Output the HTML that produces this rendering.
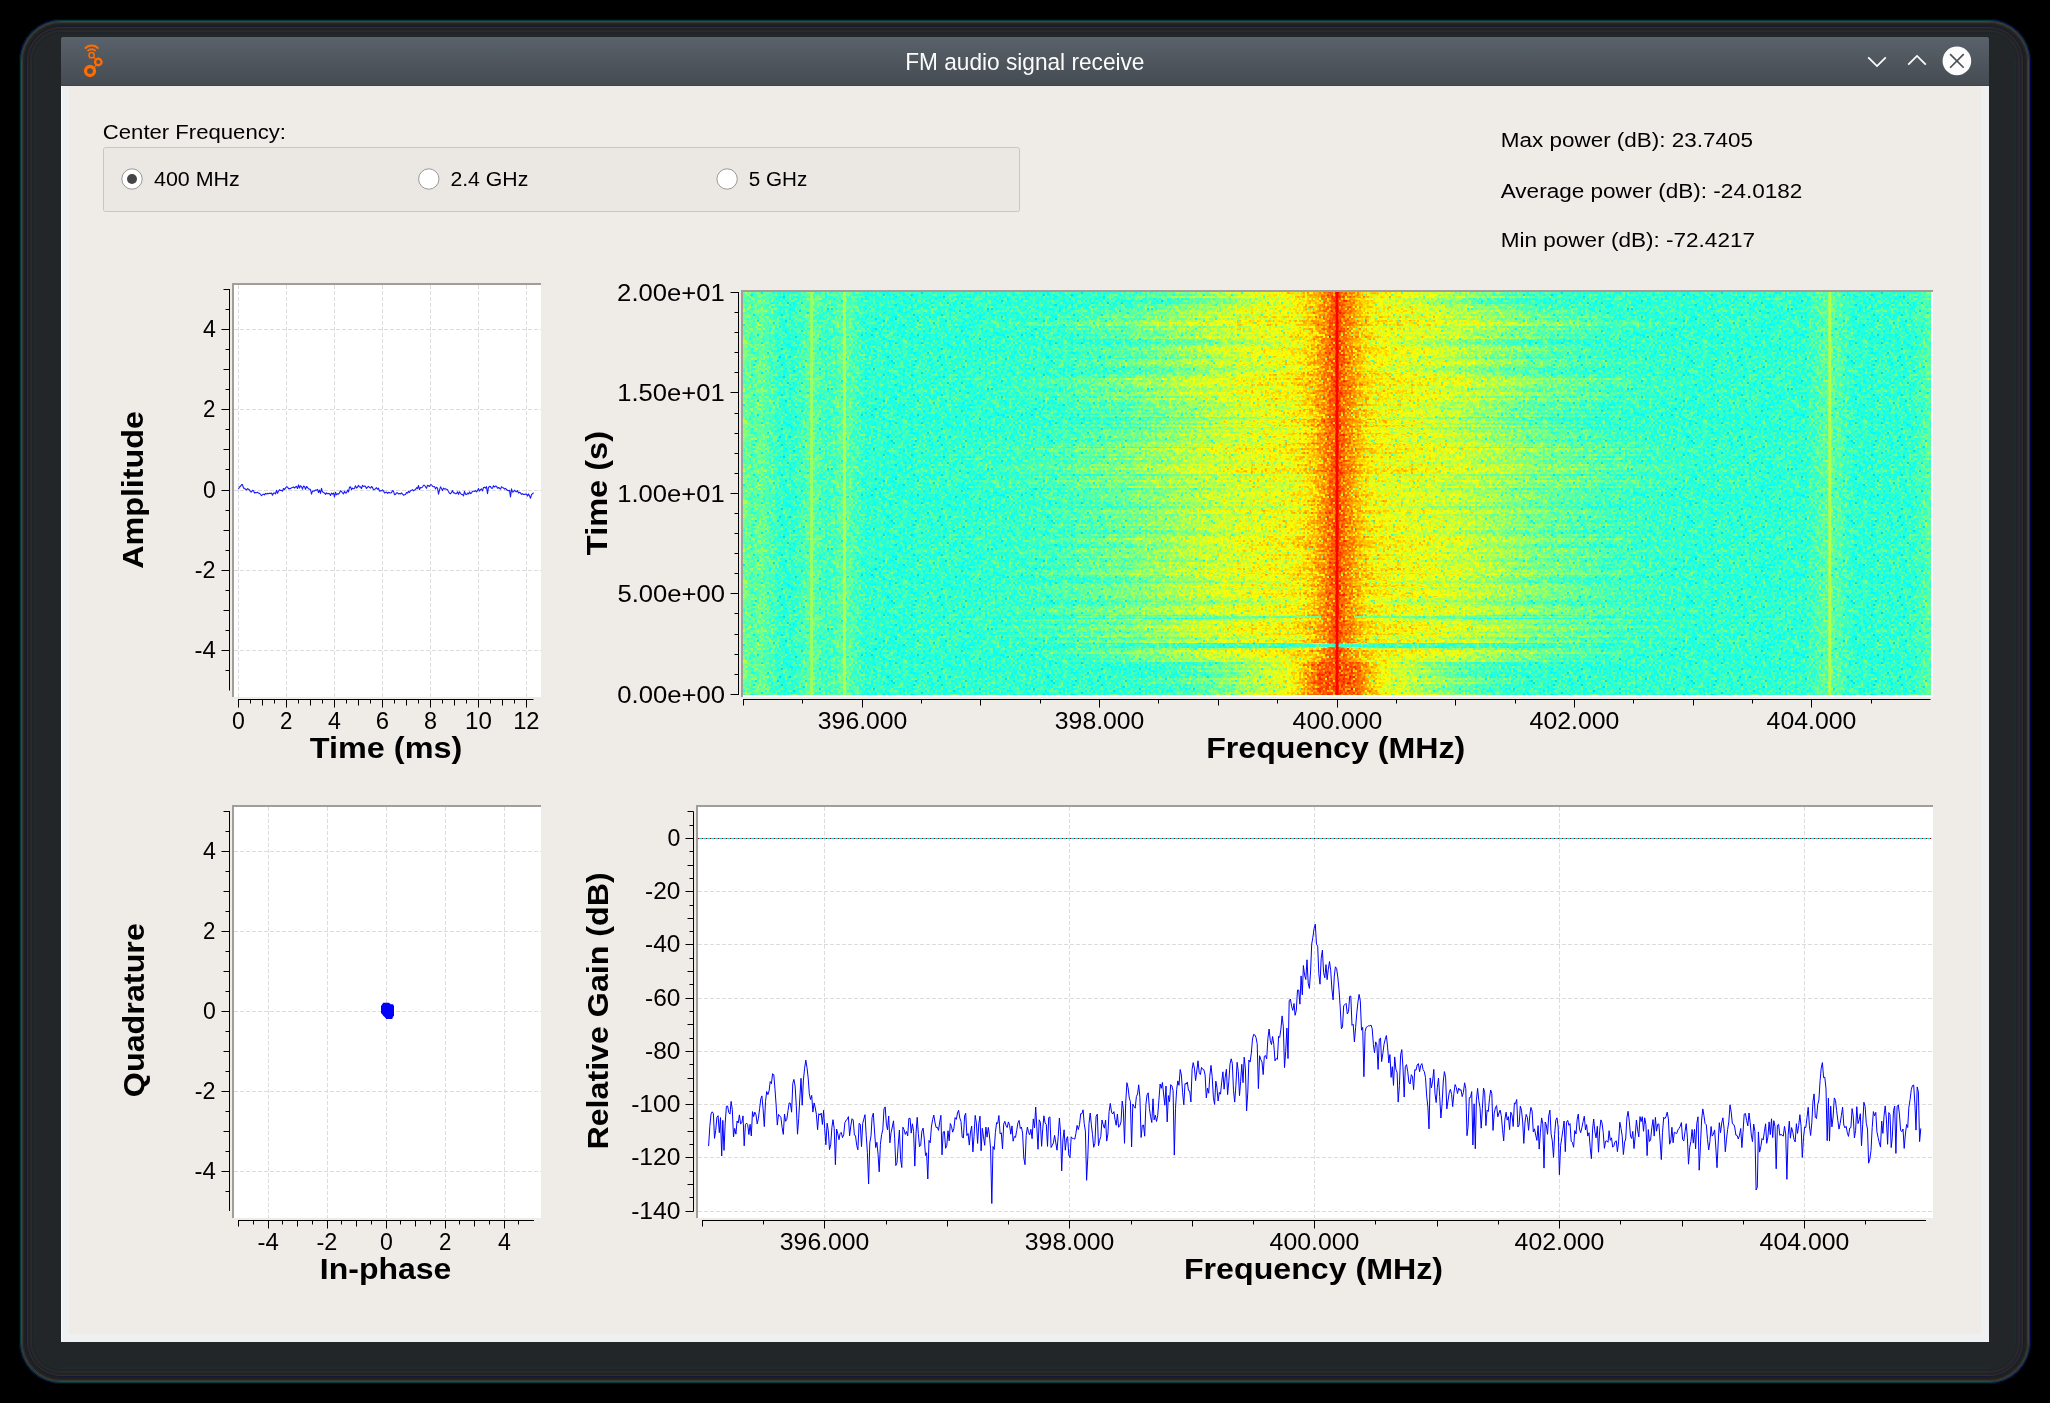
<!DOCTYPE html>
<html><head><meta charset="utf-8"><title>FM audio signal receive</title>
<style>html,body{margin:0;padding:0;background:#000;overflow:hidden;width:2050px;height:1403px}
svg{display:block;will-change:transform}text{font-family:"Liberation Sans", sans-serif}</style></head>
<body>
<svg width="2050" height="1403" viewBox="0 0 2050 1403" font-family="'Liberation Sans', sans-serif"><defs><linearGradient id="tb" x1="0" y1="0" x2="0" y2="1"><stop offset="0" stop-color="#59616a"/><stop offset="1" stop-color="#454b52"/></linearGradient><filter id="wf" filterUnits="userSpaceOnUse" x="743" y="292" width="1188" height="403" color-interpolation-filters="sRGB">
<feTurbulence type="fractalNoise" baseFrequency="0.42 0.42" numOctaves="1" seed="5" result="n"/>
<feColorMatrix in="n" type="matrix" values="1 0 0 0 0 1 0 0 0 0 1 0 0 0 0 0 0 0 0 1" result="g"/>
<feComposite in="SourceGraphic" in2="g" operator="arithmetic" k1="0.200" k2="1" k3="0.030" k4="-0.015" result="s"/>
<feComponentTransfer in="s">
<feFuncR type="table" tableValues="0 0 1 1 1"/>
<feFuncG type="table" tableValues="0.5 1 1 0 0"/>
<feFuncB type="table" tableValues="0.5 1 0 0 0"/>
<feFuncA type="linear" slope="0" intercept="1"/>
</feComponentTransfer>
</filter><linearGradient id="band" x1="0" y1="0" x2="1" y2="0"><stop offset="0.000" stop-color="rgb(67,67,67)"/><stop offset="0.025" stop-color="rgb(68,68,68)"/><stop offset="0.050" stop-color="rgb(69,69,69)"/><stop offset="0.075" stop-color="rgb(70,70,70)"/><stop offset="0.100" stop-color="rgb(72,72,72)"/><stop offset="0.125" stop-color="rgb(75,75,75)"/><stop offset="0.150" stop-color="rgb(78,78,78)"/><stop offset="0.175" stop-color="rgb(81,81,81)"/><stop offset="0.200" stop-color="rgb(86,86,86)"/><stop offset="0.225" stop-color="rgb(90,90,90)"/><stop offset="0.250" stop-color="rgb(95,95,95)"/><stop offset="0.275" stop-color="rgb(100,100,100)"/><stop offset="0.300" stop-color="rgb(106,106,106)"/><stop offset="0.325" stop-color="rgb(110,110,110)"/><stop offset="0.350" stop-color="rgb(114,114,114)"/><stop offset="0.375" stop-color="rgb(117,117,117)"/><stop offset="0.400" stop-color="rgb(120,120,120)"/><stop offset="0.425" stop-color="rgb(122,122,122)"/><stop offset="0.450" stop-color="rgb(123,123,123)"/><stop offset="0.475" stop-color="rgb(123,123,123)"/><stop offset="0.500" stop-color="rgb(124,124,124)"/><stop offset="0.525" stop-color="rgb(123,123,123)"/><stop offset="0.550" stop-color="rgb(123,123,123)"/><stop offset="0.575" stop-color="rgb(122,122,122)"/><stop offset="0.600" stop-color="rgb(120,120,120)"/><stop offset="0.625" stop-color="rgb(117,117,117)"/><stop offset="0.650" stop-color="rgb(114,114,114)"/><stop offset="0.675" stop-color="rgb(110,110,110)"/><stop offset="0.700" stop-color="rgb(106,106,106)"/><stop offset="0.725" stop-color="rgb(100,100,100)"/><stop offset="0.750" stop-color="rgb(95,95,95)"/><stop offset="0.775" stop-color="rgb(90,90,90)"/><stop offset="0.800" stop-color="rgb(86,86,86)"/><stop offset="0.825" stop-color="rgb(81,81,81)"/><stop offset="0.850" stop-color="rgb(78,78,78)"/><stop offset="0.875" stop-color="rgb(75,75,75)"/><stop offset="0.900" stop-color="rgb(72,72,72)"/><stop offset="0.925" stop-color="rgb(70,70,70)"/><stop offset="0.950" stop-color="rgb(69,69,69)"/><stop offset="0.975" stop-color="rgb(68,68,68)"/><stop offset="1.000" stop-color="rgb(67,67,67)"/></linearGradient><linearGradient id="core2" x1="0" y1="0" x2="1" y2="0"><stop offset="0" stop-color="rgb(156,156,156)" stop-opacity="0"/><stop offset="0.22" stop-color="rgb(156,156,156)" stop-opacity="0.5"/><stop offset="0.32" stop-color="rgb(156,156,156)" stop-opacity="0.95"/><stop offset="0.68" stop-color="rgb(156,156,156)" stop-opacity="0.95"/><stop offset="0.78" stop-color="rgb(156,156,156)" stop-opacity="0.5"/><stop offset="1" stop-color="rgb(156,156,156)" stop-opacity="0"/></linearGradient><linearGradient id="core" x1="0" y1="0" x2="1" y2="0"><stop offset="0.000" stop-color="rgb(160,160,160)" stop-opacity="0.000"/><stop offset="0.050" stop-color="rgb(160,160,160)" stop-opacity="0.025"/><stop offset="0.100" stop-color="rgb(160,160,160)" stop-opacity="0.050"/><stop offset="0.150" stop-color="rgb(160,160,160)" stop-opacity="0.075"/><stop offset="0.200" stop-color="rgb(160,160,160)" stop-opacity="0.100"/><stop offset="0.250" stop-color="rgb(160,160,160)" stop-opacity="0.200"/><stop offset="0.300" stop-color="rgb(160,160,160)" stop-opacity="0.300"/><stop offset="0.350" stop-color="rgb(160,160,160)" stop-opacity="0.467"/><stop offset="0.400" stop-color="rgb(160,160,160)" stop-opacity="0.647"/><stop offset="0.450" stop-color="rgb(160,160,160)" stop-opacity="0.795"/><stop offset="0.500" stop-color="rgb(160,160,160)" stop-opacity="0.920"/><stop offset="0.550" stop-color="rgb(160,160,160)" stop-opacity="0.795"/><stop offset="0.600" stop-color="rgb(160,160,160)" stop-opacity="0.647"/><stop offset="0.650" stop-color="rgb(160,160,160)" stop-opacity="0.467"/><stop offset="0.700" stop-color="rgb(160,160,160)" stop-opacity="0.300"/><stop offset="0.750" stop-color="rgb(160,160,160)" stop-opacity="0.200"/><stop offset="0.800" stop-color="rgb(160,160,160)" stop-opacity="0.100"/><stop offset="0.850" stop-color="rgb(160,160,160)" stop-opacity="0.075"/><stop offset="0.900" stop-color="rgb(160,160,160)" stop-opacity="0.050"/><stop offset="0.950" stop-color="rgb(160,160,160)" stop-opacity="0.025"/><stop offset="1.000" stop-color="rgb(160,160,160)" stop-opacity="0.000"/></linearGradient><linearGradient id="edgeL" x1="0" y1="0" x2="1" y2="0"><stop offset="0" stop-color="rgb(83,83,83)"/><stop offset="1" stop-color="rgb(67,67,67)"/></linearGradient><linearGradient id="edgeR" x1="0" y1="0" x2="1" y2="0"><stop offset="0" stop-color="rgb(67,67,67)"/><stop offset="1" stop-color="rgb(79,79,79)"/></linearGradient><linearGradient id="skirt" x1="0" y1="0" x2="1" y2="0"><stop offset="0" stop-color="rgb(80,80,80)" stop-opacity="0"/><stop offset="0.5" stop-color="rgb(80,80,80)" stop-opacity="1"/><stop offset="1" stop-color="rgb(80,80,80)" stop-opacity="0"/></linearGradient><pattern id="bn" patternUnits="userSpaceOnUse" x="743" y="292" width="160" height="80"><path d="M72 0h2v2h-2zM76 0h2v2h-2zM144 0h2v2h-2zM156 0h2v2h-2zM110 2h2v2h-2zM150 2h2v2h-2zM36 4h2v2h-2zM66 4h2v2h-2zM122 4h2v2h-2zM152 4h2v2h-2zM6 6h2v2h-2zM32 6h2v2h-2zM90 6h2v2h-2zM96 6h2v2h-2zM104 6h2v2h-2zM118 6h2v2h-2zM122 6h2v2h-2zM12 8h2v2h-2zM78 8h2v2h-2zM28 10h2v2h-2zM8 12h2v2h-2zM18 12h2v2h-2zM46 12h2v2h-2zM102 12h2v2h-2zM2 14h2v2h-2zM28 14h2v2h-2zM62 14h2v2h-2zM8 16h2v2h-2zM46 16h2v2h-2zM92 16h2v2h-2zM156 16h2v2h-2zM84 18h2v2h-2zM156 18h2v2h-2zM52 20h2v2h-2zM112 20h2v2h-2zM140 20h2v2h-2zM26 24h2v2h-2zM72 24h2v2h-2zM76 24h2v2h-2zM128 24h2v2h-2zM150 24h2v2h-2zM152 24h2v2h-2zM4 26h2v2h-2zM46 26h2v2h-2zM80 26h2v2h-2zM48 28h2v2h-2zM62 28h2v2h-2zM68 28h2v2h-2zM100 28h2v2h-2zM16 30h2v2h-2zM60 30h2v2h-2zM120 30h2v2h-2zM136 30h2v2h-2zM144 30h2v2h-2zM40 32h2v2h-2zM66 32h2v2h-2zM110 32h2v2h-2zM36 34h2v2h-2zM52 34h2v2h-2zM58 34h2v2h-2zM124 34h2v2h-2zM136 34h2v2h-2zM140 34h2v2h-2zM26 36h2v2h-2zM64 36h2v2h-2zM66 36h2v2h-2zM78 36h2v2h-2zM112 36h2v2h-2zM130 36h2v2h-2zM138 36h2v2h-2zM144 36h2v2h-2zM20 38h2v2h-2zM26 38h2v2h-2zM42 38h2v2h-2zM82 38h2v2h-2zM128 38h2v2h-2zM8 40h2v2h-2zM92 40h2v2h-2zM122 40h2v2h-2zM136 40h2v2h-2zM144 40h2v2h-2zM60 42h2v2h-2zM94 42h2v2h-2zM98 42h2v2h-2zM100 42h2v2h-2zM154 42h2v2h-2zM10 44h2v2h-2zM64 44h2v2h-2zM70 44h2v2h-2zM86 44h2v2h-2zM100 44h2v2h-2zM108 44h2v2h-2zM130 44h2v2h-2zM136 44h2v2h-2zM158 44h2v2h-2zM6 46h2v2h-2zM20 46h2v2h-2zM34 46h2v2h-2zM68 46h2v2h-2zM140 46h2v2h-2zM26 48h2v2h-2zM82 48h2v2h-2zM146 48h2v2h-2zM8 50h2v2h-2zM94 50h2v2h-2zM110 50h2v2h-2zM146 50h2v2h-2zM44 52h2v2h-2zM146 52h2v2h-2zM48 54h2v2h-2zM82 54h2v2h-2zM118 54h2v2h-2zM124 54h2v2h-2zM138 54h2v2h-2zM156 54h2v2h-2zM8 56h2v2h-2zM48 56h2v2h-2zM52 56h2v2h-2zM62 56h2v2h-2zM86 56h2v2h-2zM70 58h2v2h-2zM88 58h2v2h-2zM116 58h2v2h-2zM130 58h2v2h-2zM132 58h2v2h-2zM8 60h2v2h-2zM10 60h2v2h-2zM118 60h2v2h-2zM130 62h2v2h-2zM92 64h2v2h-2zM122 64h2v2h-2zM132 64h2v2h-2zM130 66h2v2h-2zM26 68h2v2h-2zM72 68h2v2h-2zM110 68h2v2h-2zM146 68h2v2h-2zM28 70h2v2h-2zM140 70h2v2h-2zM122 72h2v2h-2zM144 72h2v2h-2zM4 74h2v2h-2zM92 74h2v2h-2zM10 76h2v2h-2zM28 76h2v2h-2zM42 76h2v2h-2zM0 78h2v2h-2zM22 78h2v2h-2zM104 78h2v2h-2zM108 78h2v2h-2zM142 78h2v2h-2z" fill="black" fill-opacity="0.17"/><path d="M30 0h2v2h-2zM86 0h2v2h-2zM88 0h2v2h-2zM98 0h2v2h-2zM110 0h2v2h-2zM124 0h2v2h-2zM132 0h2v2h-2zM0 2h2v2h-2zM10 2h2v2h-2zM40 2h2v2h-2zM56 2h2v2h-2zM70 2h2v2h-2zM82 2h2v2h-2zM118 2h2v2h-2zM126 2h2v2h-2zM130 2h2v2h-2zM144 2h2v2h-2zM146 2h2v2h-2zM4 4h2v2h-2zM10 4h2v2h-2zM52 4h2v2h-2zM54 4h2v2h-2zM60 4h2v2h-2zM70 4h2v2h-2zM82 4h2v2h-2zM102 4h2v2h-2zM138 4h2v2h-2zM26 6h2v2h-2zM54 6h2v2h-2zM80 6h2v2h-2zM86 6h2v2h-2zM106 6h2v2h-2zM112 6h2v2h-2zM114 6h2v2h-2zM124 6h2v2h-2zM150 6h2v2h-2zM0 8h2v2h-2zM22 8h2v2h-2zM26 8h2v2h-2zM52 8h2v2h-2zM66 8h2v2h-2zM94 8h2v2h-2zM104 8h2v2h-2zM116 8h2v2h-2zM0 10h2v2h-2zM2 10h2v2h-2zM6 10h2v2h-2zM30 10h2v2h-2zM50 10h2v2h-2zM66 10h2v2h-2zM96 10h2v2h-2zM98 10h2v2h-2zM106 10h2v2h-2zM154 10h2v2h-2zM24 12h2v2h-2zM50 12h2v2h-2zM66 12h2v2h-2zM68 12h2v2h-2zM88 12h2v2h-2zM90 12h2v2h-2zM114 12h2v2h-2zM150 12h2v2h-2zM14 14h2v2h-2zM16 14h2v2h-2zM22 14h2v2h-2zM64 14h2v2h-2zM66 14h2v2h-2zM68 14h2v2h-2zM78 14h2v2h-2zM116 14h2v2h-2zM130 14h2v2h-2zM134 14h2v2h-2zM156 14h2v2h-2zM48 16h2v2h-2zM98 16h2v2h-2zM106 16h2v2h-2zM122 16h2v2h-2zM126 16h2v2h-2zM132 16h2v2h-2zM138 16h2v2h-2zM146 16h2v2h-2zM148 16h2v2h-2zM4 18h2v2h-2zM50 18h2v2h-2zM74 18h2v2h-2zM104 18h2v2h-2zM142 18h2v2h-2zM154 18h2v2h-2zM2 20h2v2h-2zM34 20h2v2h-2zM36 20h2v2h-2zM40 20h2v2h-2zM70 20h2v2h-2zM80 20h2v2h-2zM96 20h2v2h-2zM102 20h2v2h-2zM114 20h2v2h-2zM16 22h2v2h-2zM22 22h2v2h-2zM24 22h2v2h-2zM46 22h2v2h-2zM74 22h2v2h-2zM76 22h2v2h-2zM88 22h2v2h-2zM90 22h2v2h-2zM102 22h2v2h-2zM144 22h2v2h-2zM12 24h2v2h-2zM14 24h2v2h-2zM18 24h2v2h-2zM30 24h2v2h-2zM56 24h2v2h-2zM94 24h2v2h-2zM114 24h2v2h-2zM122 24h2v2h-2zM124 24h2v2h-2zM148 24h2v2h-2zM154 24h2v2h-2zM8 26h2v2h-2zM14 26h2v2h-2zM22 26h2v2h-2zM60 26h2v2h-2zM70 26h2v2h-2zM76 26h2v2h-2zM104 26h2v2h-2zM114 26h2v2h-2zM118 26h2v2h-2zM146 26h2v2h-2zM10 28h2v2h-2zM74 28h2v2h-2zM98 28h2v2h-2zM112 28h2v2h-2zM118 28h2v2h-2zM146 28h2v2h-2zM148 28h2v2h-2zM24 30h2v2h-2zM74 30h2v2h-2zM78 30h2v2h-2zM102 30h2v2h-2zM152 30h2v2h-2zM58 32h2v2h-2zM68 32h2v2h-2zM70 32h2v2h-2zM104 32h2v2h-2zM114 32h2v2h-2zM118 32h2v2h-2zM2 34h2v2h-2zM6 34h2v2h-2zM8 34h2v2h-2zM16 34h2v2h-2zM86 34h2v2h-2zM90 34h2v2h-2zM102 34h2v2h-2zM112 34h2v2h-2zM150 34h2v2h-2zM156 34h2v2h-2zM32 36h2v2h-2zM60 36h2v2h-2zM90 36h2v2h-2zM96 36h2v2h-2zM126 36h2v2h-2zM146 36h2v2h-2zM154 36h2v2h-2zM84 38h2v2h-2zM102 38h2v2h-2zM108 38h2v2h-2zM154 38h2v2h-2zM156 38h2v2h-2zM2 40h2v2h-2zM42 40h2v2h-2zM44 40h2v2h-2zM80 40h2v2h-2zM90 40h2v2h-2zM94 40h2v2h-2zM102 40h2v2h-2zM114 40h2v2h-2zM118 40h2v2h-2zM126 40h2v2h-2zM140 40h2v2h-2zM158 40h2v2h-2zM8 42h2v2h-2zM32 42h2v2h-2zM46 42h2v2h-2zM96 42h2v2h-2zM136 42h2v2h-2zM150 42h2v2h-2zM6 44h2v2h-2zM14 44h2v2h-2zM20 44h2v2h-2zM32 44h2v2h-2zM36 44h2v2h-2zM54 44h2v2h-2zM62 44h2v2h-2zM88 44h2v2h-2zM116 44h2v2h-2zM124 44h2v2h-2zM2 46h2v2h-2zM18 46h2v2h-2zM44 46h2v2h-2zM56 46h2v2h-2zM62 46h2v2h-2zM84 46h2v2h-2zM96 46h2v2h-2zM114 46h2v2h-2zM142 46h2v2h-2zM20 48h2v2h-2zM40 48h2v2h-2zM62 48h2v2h-2zM92 48h2v2h-2zM144 48h2v2h-2zM148 48h2v2h-2zM150 48h2v2h-2zM14 50h2v2h-2zM34 50h2v2h-2zM40 50h2v2h-2zM42 50h2v2h-2zM52 50h2v2h-2zM54 50h2v2h-2zM56 50h2v2h-2zM66 50h2v2h-2zM76 50h2v2h-2zM82 50h2v2h-2zM116 50h2v2h-2zM122 50h2v2h-2zM140 50h2v2h-2zM154 50h2v2h-2zM22 52h2v2h-2zM32 52h2v2h-2zM38 52h2v2h-2zM46 52h2v2h-2zM58 52h2v2h-2zM66 52h2v2h-2zM74 52h2v2h-2zM92 52h2v2h-2zM98 52h2v2h-2zM112 52h2v2h-2zM130 52h2v2h-2zM148 52h2v2h-2zM18 54h2v2h-2zM46 54h2v2h-2zM54 54h2v2h-2zM58 54h2v2h-2zM66 54h2v2h-2zM76 54h2v2h-2zM78 54h2v2h-2zM86 54h2v2h-2zM96 54h2v2h-2zM100 54h2v2h-2zM106 54h2v2h-2zM2 56h2v2h-2zM16 56h2v2h-2zM28 56h2v2h-2zM56 56h2v2h-2zM60 56h2v2h-2zM92 56h2v2h-2zM96 56h2v2h-2zM110 56h2v2h-2zM118 56h2v2h-2zM130 56h2v2h-2zM138 56h2v2h-2zM8 58h2v2h-2zM28 58h2v2h-2zM34 58h2v2h-2zM56 58h2v2h-2zM86 58h2v2h-2zM90 58h2v2h-2zM92 58h2v2h-2zM100 58h2v2h-2zM112 58h2v2h-2zM126 58h2v2h-2zM140 58h2v2h-2zM152 58h2v2h-2zM12 60h2v2h-2zM62 60h2v2h-2zM74 60h2v2h-2zM78 60h2v2h-2zM112 60h2v2h-2zM122 60h2v2h-2zM22 62h2v2h-2zM26 62h2v2h-2zM38 62h2v2h-2zM78 62h2v2h-2zM86 62h2v2h-2zM108 62h2v2h-2zM114 62h2v2h-2zM142 62h2v2h-2zM146 62h2v2h-2zM156 62h2v2h-2zM18 64h2v2h-2zM44 64h2v2h-2zM66 64h2v2h-2zM78 64h2v2h-2zM82 64h2v2h-2zM106 64h2v2h-2zM108 64h2v2h-2zM124 64h2v2h-2zM152 64h2v2h-2zM156 64h2v2h-2zM14 66h2v2h-2zM26 66h2v2h-2zM36 66h2v2h-2zM92 66h2v2h-2zM114 66h2v2h-2zM158 66h2v2h-2zM8 68h2v2h-2zM18 68h2v2h-2zM24 68h2v2h-2zM48 68h2v2h-2zM82 68h2v2h-2zM128 68h2v2h-2zM14 70h2v2h-2zM40 70h2v2h-2zM52 70h2v2h-2zM100 70h2v2h-2zM106 70h2v2h-2zM8 72h2v2h-2zM26 72h2v2h-2zM28 72h2v2h-2zM54 72h2v2h-2zM72 72h2v2h-2zM82 72h2v2h-2zM88 72h2v2h-2zM98 72h2v2h-2zM108 72h2v2h-2zM112 72h2v2h-2zM128 72h2v2h-2zM22 74h2v2h-2zM32 74h2v2h-2zM50 74h2v2h-2zM58 74h2v2h-2zM78 74h2v2h-2zM94 74h2v2h-2zM106 74h2v2h-2zM116 74h2v2h-2zM148 74h2v2h-2zM0 76h2v2h-2zM8 76h2v2h-2zM54 76h2v2h-2zM56 76h2v2h-2zM100 76h2v2h-2zM106 76h2v2h-2zM118 76h2v2h-2zM122 76h2v2h-2zM124 76h2v2h-2zM126 76h2v2h-2zM156 76h2v2h-2zM4 78h2v2h-2zM26 78h2v2h-2zM30 78h2v2h-2zM42 78h2v2h-2zM52 78h2v2h-2zM82 78h2v2h-2zM92 78h2v2h-2zM106 78h2v2h-2zM122 78h2v2h-2zM130 78h2v2h-2z" fill="black" fill-opacity="0.10"/><path d="M34 0h2v2h-2zM36 0h2v2h-2zM40 0h2v2h-2zM44 0h2v2h-2zM48 0h2v2h-2zM50 0h2v2h-2zM52 0h2v2h-2zM60 0h2v2h-2zM82 0h2v2h-2zM92 0h2v2h-2zM94 0h2v2h-2zM120 0h2v2h-2zM138 0h2v2h-2zM140 0h2v2h-2zM142 0h2v2h-2zM12 2h2v2h-2zM26 2h2v2h-2zM44 2h2v2h-2zM96 2h2v2h-2zM102 2h2v2h-2zM112 2h2v2h-2zM124 2h2v2h-2zM2 4h2v2h-2zM8 4h2v2h-2zM22 4h2v2h-2zM30 4h2v2h-2zM34 4h2v2h-2zM38 4h2v2h-2zM58 4h2v2h-2zM64 4h2v2h-2zM84 4h2v2h-2zM88 4h2v2h-2zM92 4h2v2h-2zM96 4h2v2h-2zM106 4h2v2h-2zM132 4h2v2h-2zM146 4h2v2h-2zM150 4h2v2h-2zM154 4h2v2h-2zM0 6h2v2h-2zM12 6h2v2h-2zM16 6h2v2h-2zM20 6h2v2h-2zM40 6h2v2h-2zM44 6h2v2h-2zM48 6h2v2h-2zM58 6h2v2h-2zM134 6h2v2h-2zM136 6h2v2h-2zM142 6h2v2h-2zM144 6h2v2h-2zM146 6h2v2h-2zM6 8h2v2h-2zM8 8h2v2h-2zM30 8h2v2h-2zM36 8h2v2h-2zM38 8h2v2h-2zM42 8h2v2h-2zM60 8h2v2h-2zM62 8h2v2h-2zM76 8h2v2h-2zM82 8h2v2h-2zM92 8h2v2h-2zM114 8h2v2h-2zM118 8h2v2h-2zM128 8h2v2h-2zM134 8h2v2h-2zM156 8h2v2h-2zM10 10h2v2h-2zM20 10h2v2h-2zM38 10h2v2h-2zM52 10h2v2h-2zM88 10h2v2h-2zM90 10h2v2h-2zM94 10h2v2h-2zM102 10h2v2h-2zM110 10h2v2h-2zM114 10h2v2h-2zM122 10h2v2h-2zM124 10h2v2h-2zM132 10h2v2h-2zM134 10h2v2h-2zM4 12h2v2h-2zM14 12h2v2h-2zM22 12h2v2h-2zM32 12h2v2h-2zM52 12h2v2h-2zM64 12h2v2h-2zM72 12h2v2h-2zM92 12h2v2h-2zM104 12h2v2h-2zM106 12h2v2h-2zM112 12h2v2h-2zM126 12h2v2h-2zM148 12h2v2h-2zM8 14h2v2h-2zM20 14h2v2h-2zM30 14h2v2h-2zM34 14h2v2h-2zM36 14h2v2h-2zM40 14h2v2h-2zM44 14h2v2h-2zM48 14h2v2h-2zM50 14h2v2h-2zM90 14h2v2h-2zM92 14h2v2h-2zM102 14h2v2h-2zM120 14h2v2h-2zM122 14h2v2h-2zM140 14h2v2h-2zM142 14h2v2h-2zM158 14h2v2h-2zM2 16h2v2h-2zM6 16h2v2h-2zM10 16h2v2h-2zM24 16h2v2h-2zM36 16h2v2h-2zM54 16h2v2h-2zM64 16h2v2h-2zM68 16h2v2h-2zM74 16h2v2h-2zM78 16h2v2h-2zM94 16h2v2h-2zM110 16h2v2h-2zM116 16h2v2h-2zM120 16h2v2h-2zM134 16h2v2h-2zM142 16h2v2h-2zM158 16h2v2h-2zM6 18h2v2h-2zM32 18h2v2h-2zM36 18h2v2h-2zM40 18h2v2h-2zM66 18h2v2h-2zM78 18h2v2h-2zM88 18h2v2h-2zM110 18h2v2h-2zM118 18h2v2h-2zM124 18h2v2h-2zM150 18h2v2h-2zM0 20h2v2h-2zM20 20h2v2h-2zM32 20h2v2h-2zM46 20h2v2h-2zM60 20h2v2h-2zM62 20h2v2h-2zM66 20h2v2h-2zM86 20h2v2h-2zM98 20h2v2h-2zM100 20h2v2h-2zM104 20h2v2h-2zM108 20h2v2h-2zM128 20h2v2h-2zM132 20h2v2h-2zM142 20h2v2h-2zM150 20h2v2h-2zM158 20h2v2h-2zM20 22h2v2h-2zM26 22h2v2h-2zM30 22h2v2h-2zM34 22h2v2h-2zM36 22h2v2h-2zM68 22h2v2h-2zM78 22h2v2h-2zM80 22h2v2h-2zM86 22h2v2h-2zM92 22h2v2h-2zM120 22h2v2h-2zM124 22h2v2h-2zM128 22h2v2h-2zM134 22h2v2h-2zM138 22h2v2h-2zM148 22h2v2h-2zM150 22h2v2h-2zM152 22h2v2h-2zM158 22h2v2h-2zM8 24h2v2h-2zM32 24h2v2h-2zM66 24h2v2h-2zM70 24h2v2h-2zM88 24h2v2h-2zM90 24h2v2h-2zM102 24h2v2h-2zM106 24h2v2h-2zM108 24h2v2h-2zM28 26h2v2h-2zM30 26h2v2h-2zM36 26h2v2h-2zM38 26h2v2h-2zM58 26h2v2h-2zM66 26h2v2h-2zM72 26h2v2h-2zM74 26h2v2h-2zM78 26h2v2h-2zM90 26h2v2h-2zM98 26h2v2h-2zM112 26h2v2h-2zM122 26h2v2h-2zM126 26h2v2h-2zM134 26h2v2h-2zM136 26h2v2h-2zM140 26h2v2h-2zM148 26h2v2h-2zM4 28h2v2h-2zM38 28h2v2h-2zM64 28h2v2h-2zM86 28h2v2h-2zM96 28h2v2h-2zM102 28h2v2h-2zM110 28h2v2h-2zM128 28h2v2h-2zM132 28h2v2h-2zM138 28h2v2h-2zM150 28h2v2h-2zM4 30h2v2h-2zM6 30h2v2h-2zM8 30h2v2h-2zM20 30h2v2h-2zM36 30h2v2h-2zM50 30h2v2h-2zM54 30h2v2h-2zM56 30h2v2h-2zM68 30h2v2h-2zM70 30h2v2h-2zM76 30h2v2h-2zM96 30h2v2h-2zM116 30h2v2h-2zM122 30h2v2h-2zM134 30h2v2h-2zM150 30h2v2h-2zM156 30h2v2h-2zM8 32h2v2h-2zM24 32h2v2h-2zM36 32h2v2h-2zM38 32h2v2h-2zM50 32h2v2h-2zM60 32h2v2h-2zM64 32h2v2h-2zM84 32h2v2h-2zM90 32h2v2h-2zM96 32h2v2h-2zM102 32h2v2h-2zM154 32h2v2h-2zM156 32h2v2h-2zM158 32h2v2h-2zM0 34h2v2h-2zM10 34h2v2h-2zM20 34h2v2h-2zM24 34h2v2h-2zM40 34h2v2h-2zM46 34h2v2h-2zM54 34h2v2h-2zM56 34h2v2h-2zM60 34h2v2h-2zM62 34h2v2h-2zM64 34h2v2h-2zM88 34h2v2h-2zM98 34h2v2h-2zM120 34h2v2h-2zM146 34h2v2h-2zM158 34h2v2h-2zM12 36h2v2h-2zM18 36h2v2h-2zM34 36h2v2h-2zM42 36h2v2h-2zM56 36h2v2h-2zM68 36h2v2h-2zM72 36h2v2h-2zM122 36h2v2h-2zM150 36h2v2h-2zM152 36h2v2h-2zM0 38h2v2h-2zM6 38h2v2h-2zM14 38h2v2h-2zM24 38h2v2h-2zM34 38h2v2h-2zM40 38h2v2h-2zM48 38h2v2h-2zM68 38h2v2h-2zM78 38h2v2h-2zM90 38h2v2h-2zM92 38h2v2h-2zM124 38h2v2h-2zM136 38h2v2h-2zM146 38h2v2h-2zM0 40h2v2h-2zM20 40h2v2h-2zM32 40h2v2h-2zM62 40h2v2h-2zM72 40h2v2h-2zM82 40h2v2h-2zM104 40h2v2h-2zM130 40h2v2h-2zM0 42h2v2h-2zM22 42h2v2h-2zM24 42h2v2h-2zM26 42h2v2h-2zM28 42h2v2h-2zM34 42h2v2h-2zM40 42h2v2h-2zM56 42h2v2h-2zM62 42h2v2h-2zM64 42h2v2h-2zM84 42h2v2h-2zM88 42h2v2h-2zM90 42h2v2h-2zM114 42h2v2h-2zM126 42h2v2h-2zM130 42h2v2h-2zM152 42h2v2h-2zM2 44h2v2h-2zM8 44h2v2h-2zM22 44h2v2h-2zM26 44h2v2h-2zM44 44h2v2h-2zM80 44h2v2h-2zM84 44h2v2h-2zM102 44h2v2h-2zM110 44h2v2h-2zM118 44h2v2h-2zM126 44h2v2h-2zM138 44h2v2h-2zM140 44h2v2h-2zM8 46h2v2h-2zM12 46h2v2h-2zM30 46h2v2h-2zM46 46h2v2h-2zM48 46h2v2h-2zM58 46h2v2h-2zM94 46h2v2h-2zM102 46h2v2h-2zM118 46h2v2h-2zM134 46h2v2h-2zM138 46h2v2h-2zM154 46h2v2h-2zM4 48h2v2h-2zM14 48h2v2h-2zM24 48h2v2h-2zM28 48h2v2h-2zM32 48h2v2h-2zM52 48h2v2h-2zM54 48h2v2h-2zM56 48h2v2h-2zM64 48h2v2h-2zM66 48h2v2h-2zM74 48h2v2h-2zM78 48h2v2h-2zM80 48h2v2h-2zM96 48h2v2h-2zM102 48h2v2h-2zM104 48h2v2h-2zM120 48h2v2h-2zM126 48h2v2h-2zM154 48h2v2h-2zM16 50h2v2h-2zM20 50h2v2h-2zM28 50h2v2h-2zM36 50h2v2h-2zM86 50h2v2h-2zM92 50h2v2h-2zM114 50h2v2h-2zM124 50h2v2h-2zM130 50h2v2h-2zM42 52h2v2h-2zM54 52h2v2h-2zM72 52h2v2h-2zM78 52h2v2h-2zM100 52h2v2h-2zM104 52h2v2h-2zM118 52h2v2h-2zM128 52h2v2h-2zM132 52h2v2h-2zM138 52h2v2h-2zM4 54h2v2h-2zM6 54h2v2h-2zM14 54h2v2h-2zM30 54h2v2h-2zM34 54h2v2h-2zM44 54h2v2h-2zM52 54h2v2h-2zM70 54h2v2h-2zM74 54h2v2h-2zM120 54h2v2h-2zM146 54h2v2h-2zM154 54h2v2h-2zM4 56h2v2h-2zM6 56h2v2h-2zM26 56h2v2h-2zM34 56h2v2h-2zM82 56h2v2h-2zM84 56h2v2h-2zM106 56h2v2h-2zM126 56h2v2h-2zM140 56h2v2h-2zM142 56h2v2h-2zM156 56h2v2h-2zM6 58h2v2h-2zM20 58h2v2h-2zM22 58h2v2h-2zM32 58h2v2h-2zM62 58h2v2h-2zM72 58h2v2h-2zM94 58h2v2h-2zM98 58h2v2h-2zM110 58h2v2h-2zM122 58h2v2h-2zM148 58h2v2h-2zM6 60h2v2h-2zM14 60h2v2h-2zM32 60h2v2h-2zM56 60h2v2h-2zM60 60h2v2h-2zM66 60h2v2h-2zM84 60h2v2h-2zM86 60h2v2h-2zM90 60h2v2h-2zM100 60h2v2h-2zM110 60h2v2h-2zM124 60h2v2h-2zM132 60h2v2h-2zM136 60h2v2h-2zM158 60h2v2h-2zM10 62h2v2h-2zM12 62h2v2h-2zM14 62h2v2h-2zM24 62h2v2h-2zM36 62h2v2h-2zM54 62h2v2h-2zM60 62h2v2h-2zM72 62h2v2h-2zM74 62h2v2h-2zM92 62h2v2h-2zM102 62h2v2h-2zM110 62h2v2h-2zM124 62h2v2h-2zM132 62h2v2h-2zM138 62h2v2h-2zM140 62h2v2h-2zM144 62h2v2h-2zM154 62h2v2h-2zM158 62h2v2h-2zM4 64h2v2h-2zM8 64h2v2h-2zM14 64h2v2h-2zM48 64h2v2h-2zM68 64h2v2h-2zM74 64h2v2h-2zM98 64h2v2h-2zM100 64h2v2h-2zM110 64h2v2h-2zM116 64h2v2h-2zM138 64h2v2h-2zM142 64h2v2h-2zM146 64h2v2h-2zM22 66h2v2h-2zM28 66h2v2h-2zM34 66h2v2h-2zM40 66h2v2h-2zM44 66h2v2h-2zM52 66h2v2h-2zM54 66h2v2h-2zM56 66h2v2h-2zM60 66h2v2h-2zM74 66h2v2h-2zM84 66h2v2h-2zM88 66h2v2h-2zM118 66h2v2h-2zM10 68h2v2h-2zM14 68h2v2h-2zM20 68h2v2h-2zM44 68h2v2h-2zM50 68h2v2h-2zM64 68h2v2h-2zM70 68h2v2h-2zM86 68h2v2h-2zM98 68h2v2h-2zM102 68h2v2h-2zM124 68h2v2h-2zM152 68h2v2h-2zM154 68h2v2h-2zM2 70h2v2h-2zM4 70h2v2h-2zM6 70h2v2h-2zM8 70h2v2h-2zM24 70h2v2h-2zM32 70h2v2h-2zM58 70h2v2h-2zM64 70h2v2h-2zM66 70h2v2h-2zM80 70h2v2h-2zM82 70h2v2h-2zM112 70h2v2h-2zM114 70h2v2h-2zM116 70h2v2h-2zM128 70h2v2h-2zM132 70h2v2h-2zM136 70h2v2h-2zM146 70h2v2h-2zM148 70h2v2h-2zM154 70h2v2h-2zM0 72h2v2h-2zM36 72h2v2h-2zM42 72h2v2h-2zM46 72h2v2h-2zM58 72h2v2h-2zM92 72h2v2h-2zM116 72h2v2h-2zM124 72h2v2h-2zM126 72h2v2h-2zM138 72h2v2h-2zM148 72h2v2h-2zM8 74h2v2h-2zM16 74h2v2h-2zM18 74h2v2h-2zM28 74h2v2h-2zM36 74h2v2h-2zM40 74h2v2h-2zM68 74h2v2h-2zM70 74h2v2h-2zM76 74h2v2h-2zM86 74h2v2h-2zM120 74h2v2h-2zM126 74h2v2h-2zM132 74h2v2h-2zM134 74h2v2h-2zM144 74h2v2h-2zM32 76h2v2h-2zM40 76h2v2h-2zM46 76h2v2h-2zM48 76h2v2h-2zM58 76h2v2h-2zM64 76h2v2h-2zM88 76h2v2h-2zM116 76h2v2h-2zM150 76h2v2h-2zM152 76h2v2h-2zM154 76h2v2h-2zM158 76h2v2h-2zM6 78h2v2h-2zM8 78h2v2h-2zM38 78h2v2h-2zM40 78h2v2h-2zM60 78h2v2h-2zM78 78h2v2h-2zM84 78h2v2h-2zM86 78h2v2h-2zM90 78h2v2h-2zM98 78h2v2h-2zM134 78h2v2h-2z" fill="black" fill-opacity="0.04"/><path d="M12 0h2v2h-2zM14 0h2v2h-2zM22 0h2v2h-2zM26 0h2v2h-2zM32 0h2v2h-2zM38 0h2v2h-2zM66 0h2v2h-2zM68 0h2v2h-2zM70 0h2v2h-2zM78 0h2v2h-2zM90 0h2v2h-2zM104 0h2v2h-2zM106 0h2v2h-2zM116 0h2v2h-2zM118 0h2v2h-2zM126 0h2v2h-2zM146 0h2v2h-2zM148 0h2v2h-2zM152 0h2v2h-2zM154 0h2v2h-2zM18 2h2v2h-2zM20 2h2v2h-2zM28 2h2v2h-2zM42 2h2v2h-2zM54 2h2v2h-2zM58 2h2v2h-2zM60 2h2v2h-2zM62 2h2v2h-2zM68 2h2v2h-2zM72 2h2v2h-2zM74 2h2v2h-2zM78 2h2v2h-2zM92 2h2v2h-2zM98 2h2v2h-2zM106 2h2v2h-2zM114 2h2v2h-2zM142 2h2v2h-2zM148 2h2v2h-2zM152 2h2v2h-2zM156 2h2v2h-2zM14 4h2v2h-2zM26 4h2v2h-2zM44 4h2v2h-2zM48 4h2v2h-2zM72 4h2v2h-2zM76 4h2v2h-2zM78 4h2v2h-2zM98 4h2v2h-2zM110 4h2v2h-2zM118 4h2v2h-2zM120 4h2v2h-2zM136 4h2v2h-2zM148 4h2v2h-2zM158 4h2v2h-2zM2 6h2v2h-2zM18 6h2v2h-2zM22 6h2v2h-2zM28 6h2v2h-2zM30 6h2v2h-2zM36 6h2v2h-2zM56 6h2v2h-2zM60 6h2v2h-2zM70 6h2v2h-2zM84 6h2v2h-2zM88 6h2v2h-2zM94 6h2v2h-2zM98 6h2v2h-2zM120 6h2v2h-2zM128 6h2v2h-2zM130 6h2v2h-2zM140 6h2v2h-2zM156 6h2v2h-2zM158 6h2v2h-2zM4 8h2v2h-2zM24 8h2v2h-2zM32 8h2v2h-2zM44 8h2v2h-2zM46 8h2v2h-2zM56 8h2v2h-2zM70 8h2v2h-2zM72 8h2v2h-2zM74 8h2v2h-2zM80 8h2v2h-2zM84 8h2v2h-2zM110 8h2v2h-2zM124 8h2v2h-2zM126 8h2v2h-2zM144 8h2v2h-2zM150 8h2v2h-2zM154 8h2v2h-2zM14 10h2v2h-2zM18 10h2v2h-2zM22 10h2v2h-2zM42 10h2v2h-2zM46 10h2v2h-2zM60 10h2v2h-2zM78 10h2v2h-2zM84 10h2v2h-2zM92 10h2v2h-2zM126 10h2v2h-2zM148 10h2v2h-2zM152 10h2v2h-2zM156 10h2v2h-2zM0 12h2v2h-2zM48 12h2v2h-2zM70 12h2v2h-2zM76 12h2v2h-2zM94 12h2v2h-2zM96 12h2v2h-2zM98 12h2v2h-2zM108 12h2v2h-2zM110 12h2v2h-2zM116 12h2v2h-2zM132 12h2v2h-2zM158 12h2v2h-2zM4 14h2v2h-2zM10 14h2v2h-2zM18 14h2v2h-2zM32 14h2v2h-2zM46 14h2v2h-2zM54 14h2v2h-2zM58 14h2v2h-2zM94 14h2v2h-2zM98 14h2v2h-2zM100 14h2v2h-2zM106 14h2v2h-2zM114 14h2v2h-2zM124 14h2v2h-2zM132 14h2v2h-2zM144 14h2v2h-2zM16 16h2v2h-2zM44 16h2v2h-2zM58 16h2v2h-2zM60 16h2v2h-2zM62 16h2v2h-2zM80 16h2v2h-2zM86 16h2v2h-2zM90 16h2v2h-2zM102 16h2v2h-2zM104 16h2v2h-2zM108 16h2v2h-2zM112 16h2v2h-2zM118 16h2v2h-2zM152 16h2v2h-2zM154 16h2v2h-2zM10 18h2v2h-2zM16 18h2v2h-2zM18 18h2v2h-2zM34 18h2v2h-2zM52 18h2v2h-2zM64 18h2v2h-2zM72 18h2v2h-2zM76 18h2v2h-2zM80 18h2v2h-2zM90 18h2v2h-2zM92 18h2v2h-2zM96 18h2v2h-2zM106 18h2v2h-2zM112 18h2v2h-2zM116 18h2v2h-2zM130 18h2v2h-2zM132 18h2v2h-2zM136 18h2v2h-2zM146 18h2v2h-2zM152 18h2v2h-2zM12 20h2v2h-2zM14 20h2v2h-2zM16 20h2v2h-2zM18 20h2v2h-2zM30 20h2v2h-2zM42 20h2v2h-2zM44 20h2v2h-2zM48 20h2v2h-2zM54 20h2v2h-2zM68 20h2v2h-2zM92 20h2v2h-2zM106 20h2v2h-2zM120 20h2v2h-2zM122 20h2v2h-2zM126 20h2v2h-2zM130 20h2v2h-2zM134 20h2v2h-2zM136 20h2v2h-2zM138 20h2v2h-2zM42 22h2v2h-2zM48 22h2v2h-2zM54 22h2v2h-2zM62 22h2v2h-2zM70 22h2v2h-2zM82 22h2v2h-2zM84 22h2v2h-2zM96 22h2v2h-2zM104 22h2v2h-2zM126 22h2v2h-2zM130 22h2v2h-2zM140 22h2v2h-2zM142 22h2v2h-2zM156 22h2v2h-2zM2 24h2v2h-2zM6 24h2v2h-2zM10 24h2v2h-2zM28 24h2v2h-2zM44 24h2v2h-2zM48 24h2v2h-2zM52 24h2v2h-2zM68 24h2v2h-2zM74 24h2v2h-2zM80 24h2v2h-2zM116 24h2v2h-2zM132 24h2v2h-2zM136 24h2v2h-2zM146 24h2v2h-2zM12 26h2v2h-2zM24 26h2v2h-2zM26 26h2v2h-2zM44 26h2v2h-2zM54 26h2v2h-2zM56 26h2v2h-2zM68 26h2v2h-2zM96 26h2v2h-2zM110 26h2v2h-2zM150 26h2v2h-2zM158 26h2v2h-2zM0 28h2v2h-2zM6 28h2v2h-2zM8 28h2v2h-2zM12 28h2v2h-2zM20 28h2v2h-2zM24 28h2v2h-2zM36 28h2v2h-2zM54 28h2v2h-2zM56 28h2v2h-2zM58 28h2v2h-2zM70 28h2v2h-2zM82 28h2v2h-2zM92 28h2v2h-2zM94 28h2v2h-2zM114 28h2v2h-2zM116 28h2v2h-2zM122 28h2v2h-2zM134 28h2v2h-2zM152 28h2v2h-2zM22 30h2v2h-2zM44 30h2v2h-2zM52 30h2v2h-2zM108 30h2v2h-2zM112 30h2v2h-2zM138 30h2v2h-2zM6 32h2v2h-2zM28 32h2v2h-2zM42 32h2v2h-2zM74 32h2v2h-2zM78 32h2v2h-2zM80 32h2v2h-2zM92 32h2v2h-2zM98 32h2v2h-2zM120 32h2v2h-2zM126 32h2v2h-2zM136 32h2v2h-2zM146 32h2v2h-2zM152 32h2v2h-2zM4 34h2v2h-2zM42 34h2v2h-2zM44 34h2v2h-2zM48 34h2v2h-2zM72 34h2v2h-2zM96 34h2v2h-2zM100 34h2v2h-2zM104 34h2v2h-2zM108 34h2v2h-2zM116 34h2v2h-2zM138 34h2v2h-2zM152 34h2v2h-2zM24 36h2v2h-2zM50 36h2v2h-2zM52 36h2v2h-2zM62 36h2v2h-2zM82 36h2v2h-2zM84 36h2v2h-2zM102 36h2v2h-2zM108 36h2v2h-2zM114 36h2v2h-2zM142 36h2v2h-2zM12 38h2v2h-2zM18 38h2v2h-2zM36 38h2v2h-2zM44 38h2v2h-2zM46 38h2v2h-2zM72 38h2v2h-2zM74 38h2v2h-2zM86 38h2v2h-2zM94 38h2v2h-2zM96 38h2v2h-2zM104 38h2v2h-2zM118 38h2v2h-2zM144 38h2v2h-2zM148 38h2v2h-2zM150 38h2v2h-2zM158 38h2v2h-2zM4 40h2v2h-2zM6 40h2v2h-2zM12 40h2v2h-2zM24 40h2v2h-2zM26 40h2v2h-2zM34 40h2v2h-2zM38 40h2v2h-2zM54 40h2v2h-2zM74 40h2v2h-2zM88 40h2v2h-2zM96 40h2v2h-2zM108 40h2v2h-2zM112 40h2v2h-2zM116 40h2v2h-2zM124 40h2v2h-2zM138 40h2v2h-2zM150 40h2v2h-2zM12 42h2v2h-2zM58 42h2v2h-2zM66 42h2v2h-2zM82 42h2v2h-2zM86 42h2v2h-2zM104 42h2v2h-2zM106 42h2v2h-2zM110 42h2v2h-2zM112 42h2v2h-2zM132 42h2v2h-2zM138 42h2v2h-2zM142 42h2v2h-2zM146 42h2v2h-2zM156 42h2v2h-2zM4 44h2v2h-2zM16 44h2v2h-2zM34 44h2v2h-2zM40 44h2v2h-2zM48 44h2v2h-2zM50 44h2v2h-2zM66 44h2v2h-2zM68 44h2v2h-2zM74 44h2v2h-2zM78 44h2v2h-2zM92 44h2v2h-2zM94 44h2v2h-2zM112 44h2v2h-2zM144 44h2v2h-2zM156 44h2v2h-2zM0 46h2v2h-2zM14 46h2v2h-2zM24 46h2v2h-2zM36 46h2v2h-2zM38 46h2v2h-2zM60 46h2v2h-2zM64 46h2v2h-2zM66 46h2v2h-2zM74 46h2v2h-2zM82 46h2v2h-2zM88 46h2v2h-2zM98 46h2v2h-2zM106 46h2v2h-2zM112 46h2v2h-2zM148 46h2v2h-2zM38 48h2v2h-2zM42 48h2v2h-2zM44 48h2v2h-2zM48 48h2v2h-2zM58 48h2v2h-2zM70 48h2v2h-2zM72 48h2v2h-2zM76 48h2v2h-2zM86 48h2v2h-2zM88 48h2v2h-2zM94 48h2v2h-2zM108 48h2v2h-2zM110 48h2v2h-2zM122 48h2v2h-2zM132 48h2v2h-2zM158 48h2v2h-2zM4 50h2v2h-2zM10 50h2v2h-2zM32 50h2v2h-2zM58 50h2v2h-2zM68 50h2v2h-2zM72 50h2v2h-2zM78 50h2v2h-2zM80 50h2v2h-2zM84 50h2v2h-2zM100 50h2v2h-2zM136 50h2v2h-2zM144 50h2v2h-2zM148 50h2v2h-2zM150 50h2v2h-2zM156 50h2v2h-2zM0 52h2v2h-2zM4 52h2v2h-2zM34 52h2v2h-2zM36 52h2v2h-2zM50 52h2v2h-2zM62 52h2v2h-2zM68 52h2v2h-2zM76 52h2v2h-2zM102 52h2v2h-2zM122 52h2v2h-2zM140 52h2v2h-2zM154 52h2v2h-2zM8 54h2v2h-2zM28 54h2v2h-2zM36 54h2v2h-2zM62 54h2v2h-2zM92 54h2v2h-2zM94 54h2v2h-2zM98 54h2v2h-2zM102 54h2v2h-2zM104 54h2v2h-2zM110 54h2v2h-2zM126 54h2v2h-2zM128 54h2v2h-2zM134 54h2v2h-2zM140 54h2v2h-2zM152 54h2v2h-2zM158 54h2v2h-2zM18 56h2v2h-2zM32 56h2v2h-2zM42 56h2v2h-2zM54 56h2v2h-2zM58 56h2v2h-2zM64 56h2v2h-2zM74 56h2v2h-2zM78 56h2v2h-2zM90 56h2v2h-2zM94 56h2v2h-2zM100 56h2v2h-2zM112 56h2v2h-2zM122 56h2v2h-2zM128 56h2v2h-2zM136 56h2v2h-2zM150 56h2v2h-2zM152 56h2v2h-2zM0 58h2v2h-2zM4 58h2v2h-2zM24 58h2v2h-2zM38 58h2v2h-2zM42 58h2v2h-2zM44 58h2v2h-2zM46 58h2v2h-2zM54 58h2v2h-2zM68 58h2v2h-2zM82 58h2v2h-2zM104 58h2v2h-2zM124 58h2v2h-2zM138 58h2v2h-2zM144 58h2v2h-2zM150 58h2v2h-2zM154 58h2v2h-2zM156 58h2v2h-2zM34 60h2v2h-2zM36 60h2v2h-2zM38 60h2v2h-2zM44 60h2v2h-2zM54 60h2v2h-2zM72 60h2v2h-2zM96 60h2v2h-2zM120 60h2v2h-2zM130 60h2v2h-2zM152 60h2v2h-2zM154 60h2v2h-2zM2 62h2v2h-2zM4 62h2v2h-2zM6 62h2v2h-2zM34 62h2v2h-2zM44 62h2v2h-2zM48 62h2v2h-2zM52 62h2v2h-2zM56 62h2v2h-2zM62 62h2v2h-2zM76 62h2v2h-2zM90 62h2v2h-2zM100 62h2v2h-2zM106 62h2v2h-2zM122 62h2v2h-2zM128 62h2v2h-2zM136 62h2v2h-2zM148 62h2v2h-2zM2 64h2v2h-2zM10 64h2v2h-2zM16 64h2v2h-2zM54 64h2v2h-2zM56 64h2v2h-2zM58 64h2v2h-2zM94 64h2v2h-2zM120 64h2v2h-2zM136 64h2v2h-2zM158 64h2v2h-2zM0 66h2v2h-2zM16 66h2v2h-2zM18 66h2v2h-2zM46 66h2v2h-2zM50 66h2v2h-2zM62 66h2v2h-2zM86 66h2v2h-2zM100 66h2v2h-2zM112 66h2v2h-2zM116 66h2v2h-2zM132 66h2v2h-2zM134 66h2v2h-2zM138 66h2v2h-2zM154 66h2v2h-2zM156 66h2v2h-2zM28 68h2v2h-2zM32 68h2v2h-2zM46 68h2v2h-2zM52 68h2v2h-2zM68 68h2v2h-2zM74 68h2v2h-2zM80 68h2v2h-2zM88 68h2v2h-2zM94 68h2v2h-2zM96 68h2v2h-2zM106 68h2v2h-2zM108 68h2v2h-2zM116 68h2v2h-2zM120 68h2v2h-2zM126 68h2v2h-2zM132 68h2v2h-2zM134 68h2v2h-2zM140 68h2v2h-2zM142 68h2v2h-2zM158 68h2v2h-2zM10 70h2v2h-2zM12 70h2v2h-2zM16 70h2v2h-2zM18 70h2v2h-2zM44 70h2v2h-2zM50 70h2v2h-2zM54 70h2v2h-2zM56 70h2v2h-2zM70 70h2v2h-2zM72 70h2v2h-2zM78 70h2v2h-2zM92 70h2v2h-2zM94 70h2v2h-2zM96 70h2v2h-2zM110 70h2v2h-2zM120 70h2v2h-2zM134 70h2v2h-2zM152 70h2v2h-2zM156 70h2v2h-2zM22 72h2v2h-2zM50 72h2v2h-2zM60 72h2v2h-2zM64 72h2v2h-2zM66 72h2v2h-2zM76 72h2v2h-2zM90 72h2v2h-2zM110 72h2v2h-2zM132 72h2v2h-2zM146 72h2v2h-2zM150 72h2v2h-2zM156 72h2v2h-2zM0 74h2v2h-2zM12 74h2v2h-2zM26 74h2v2h-2zM30 74h2v2h-2zM54 74h2v2h-2zM74 74h2v2h-2zM88 74h2v2h-2zM96 74h2v2h-2zM98 74h2v2h-2zM100 74h2v2h-2zM102 74h2v2h-2zM104 74h2v2h-2zM108 74h2v2h-2zM112 74h2v2h-2zM124 74h2v2h-2zM128 74h2v2h-2zM136 74h2v2h-2zM150 74h2v2h-2zM152 74h2v2h-2zM158 74h2v2h-2zM14 76h2v2h-2zM18 76h2v2h-2zM24 76h2v2h-2zM30 76h2v2h-2zM36 76h2v2h-2zM44 76h2v2h-2zM52 76h2v2h-2zM74 76h2v2h-2zM92 76h2v2h-2zM102 76h2v2h-2zM108 76h2v2h-2zM112 76h2v2h-2zM120 76h2v2h-2zM134 76h2v2h-2zM138 76h2v2h-2zM2 78h2v2h-2zM14 78h2v2h-2zM18 78h2v2h-2zM32 78h2v2h-2zM34 78h2v2h-2zM36 78h2v2h-2zM44 78h2v2h-2zM48 78h2v2h-2zM62 78h2v2h-2zM66 78h2v2h-2zM76 78h2v2h-2zM94 78h2v2h-2zM100 78h2v2h-2zM102 78h2v2h-2zM110 78h2v2h-2zM112 78h2v2h-2zM114 78h2v2h-2zM116 78h2v2h-2zM118 78h2v2h-2zM126 78h2v2h-2zM140 78h2v2h-2zM158 78h2v2h-2z" fill="white" fill-opacity="0.03"/><path d="M6 0h2v2h-2zM58 0h2v2h-2zM96 0h2v2h-2zM112 0h2v2h-2zM130 0h2v2h-2zM134 0h2v2h-2zM150 0h2v2h-2zM4 2h2v2h-2zM16 2h2v2h-2zM30 2h2v2h-2zM38 2h2v2h-2zM48 2h2v2h-2zM80 2h2v2h-2zM84 2h2v2h-2zM86 2h2v2h-2zM88 2h2v2h-2zM90 2h2v2h-2zM134 2h2v2h-2zM136 2h2v2h-2zM154 2h2v2h-2zM16 4h2v2h-2zM46 4h2v2h-2zM74 4h2v2h-2zM80 4h2v2h-2zM108 4h2v2h-2zM112 4h2v2h-2zM116 4h2v2h-2zM126 4h2v2h-2zM130 4h2v2h-2zM144 4h2v2h-2zM8 6h2v2h-2zM10 6h2v2h-2zM42 6h2v2h-2zM50 6h2v2h-2zM62 6h2v2h-2zM66 6h2v2h-2zM74 6h2v2h-2zM78 6h2v2h-2zM100 6h2v2h-2zM102 6h2v2h-2zM108 6h2v2h-2zM110 6h2v2h-2zM116 6h2v2h-2zM10 8h2v2h-2zM16 8h2v2h-2zM48 8h2v2h-2zM50 8h2v2h-2zM96 8h2v2h-2zM102 8h2v2h-2zM112 8h2v2h-2zM130 8h2v2h-2zM16 10h2v2h-2zM24 10h2v2h-2zM54 10h2v2h-2zM68 10h2v2h-2zM70 10h2v2h-2zM76 10h2v2h-2zM100 10h2v2h-2zM130 10h2v2h-2zM136 10h2v2h-2zM144 10h2v2h-2zM150 10h2v2h-2zM158 10h2v2h-2zM6 12h2v2h-2zM10 12h2v2h-2zM12 12h2v2h-2zM30 12h2v2h-2zM34 12h2v2h-2zM36 12h2v2h-2zM42 12h2v2h-2zM78 12h2v2h-2zM118 12h2v2h-2zM120 12h2v2h-2zM128 12h2v2h-2zM136 12h2v2h-2zM12 14h2v2h-2zM60 14h2v2h-2zM74 14h2v2h-2zM80 14h2v2h-2zM82 14h2v2h-2zM104 14h2v2h-2zM110 14h2v2h-2zM136 14h2v2h-2zM146 14h2v2h-2zM148 14h2v2h-2zM0 16h2v2h-2zM30 16h2v2h-2zM42 16h2v2h-2zM66 16h2v2h-2zM70 16h2v2h-2zM114 16h2v2h-2zM124 16h2v2h-2zM128 16h2v2h-2zM130 16h2v2h-2zM12 18h2v2h-2zM38 18h2v2h-2zM54 18h2v2h-2zM94 18h2v2h-2zM98 18h2v2h-2zM100 18h2v2h-2zM102 18h2v2h-2zM122 18h2v2h-2zM126 18h2v2h-2zM128 18h2v2h-2zM8 20h2v2h-2zM38 20h2v2h-2zM50 20h2v2h-2zM56 20h2v2h-2zM74 20h2v2h-2zM78 20h2v2h-2zM84 20h2v2h-2zM118 20h2v2h-2zM144 20h2v2h-2zM152 20h2v2h-2zM4 22h2v2h-2zM18 22h2v2h-2zM44 22h2v2h-2zM52 22h2v2h-2zM56 22h2v2h-2zM64 22h2v2h-2zM118 22h2v2h-2zM4 24h2v2h-2zM24 24h2v2h-2zM34 24h2v2h-2zM36 24h2v2h-2zM38 24h2v2h-2zM42 24h2v2h-2zM60 24h2v2h-2zM62 24h2v2h-2zM64 24h2v2h-2zM86 24h2v2h-2zM96 24h2v2h-2zM100 24h2v2h-2zM120 24h2v2h-2zM126 24h2v2h-2zM130 24h2v2h-2zM138 24h2v2h-2zM142 24h2v2h-2zM144 24h2v2h-2zM156 24h2v2h-2zM158 24h2v2h-2zM18 26h2v2h-2zM48 26h2v2h-2zM92 26h2v2h-2zM106 26h2v2h-2zM108 26h2v2h-2zM124 26h2v2h-2zM128 26h2v2h-2zM144 26h2v2h-2zM154 26h2v2h-2zM2 28h2v2h-2zM28 28h2v2h-2zM30 28h2v2h-2zM44 28h2v2h-2zM46 28h2v2h-2zM66 28h2v2h-2zM72 28h2v2h-2zM76 28h2v2h-2zM78 28h2v2h-2zM80 28h2v2h-2zM90 28h2v2h-2zM106 28h2v2h-2zM154 28h2v2h-2zM158 28h2v2h-2zM0 30h2v2h-2zM12 30h2v2h-2zM26 30h2v2h-2zM28 30h2v2h-2zM80 30h2v2h-2zM82 30h2v2h-2zM92 30h2v2h-2zM94 30h2v2h-2zM124 30h2v2h-2zM126 30h2v2h-2zM128 30h2v2h-2zM130 30h2v2h-2zM132 30h2v2h-2zM154 30h2v2h-2zM2 32h2v2h-2zM18 32h2v2h-2zM106 32h2v2h-2zM144 32h2v2h-2zM28 34h2v2h-2zM38 34h2v2h-2zM66 34h2v2h-2zM68 34h2v2h-2zM84 34h2v2h-2zM92 34h2v2h-2zM114 34h2v2h-2zM126 34h2v2h-2zM6 36h2v2h-2zM30 36h2v2h-2zM36 36h2v2h-2zM54 36h2v2h-2zM80 36h2v2h-2zM86 36h2v2h-2zM88 36h2v2h-2zM98 36h2v2h-2zM118 36h2v2h-2zM120 36h2v2h-2zM148 36h2v2h-2zM8 38h2v2h-2zM32 38h2v2h-2zM52 38h2v2h-2zM56 38h2v2h-2zM80 38h2v2h-2zM112 38h2v2h-2zM114 38h2v2h-2zM120 38h2v2h-2zM126 38h2v2h-2zM142 38h2v2h-2zM152 38h2v2h-2zM10 40h2v2h-2zM18 40h2v2h-2zM28 40h2v2h-2zM30 40h2v2h-2zM40 40h2v2h-2zM46 40h2v2h-2zM64 40h2v2h-2zM70 40h2v2h-2zM76 40h2v2h-2zM128 40h2v2h-2zM132 40h2v2h-2zM134 40h2v2h-2zM146 40h2v2h-2zM2 42h2v2h-2zM36 42h2v2h-2zM68 42h2v2h-2zM70 42h2v2h-2zM102 42h2v2h-2zM120 42h2v2h-2zM140 42h2v2h-2zM144 42h2v2h-2zM148 42h2v2h-2zM18 44h2v2h-2zM72 44h2v2h-2zM114 44h2v2h-2zM134 44h2v2h-2zM154 44h2v2h-2zM10 46h2v2h-2zM54 46h2v2h-2zM70 46h2v2h-2zM72 46h2v2h-2zM80 46h2v2h-2zM100 46h2v2h-2zM104 46h2v2h-2zM126 46h2v2h-2zM144 46h2v2h-2zM18 48h2v2h-2zM60 48h2v2h-2zM84 48h2v2h-2zM90 48h2v2h-2zM98 48h2v2h-2zM152 48h2v2h-2zM0 50h2v2h-2zM22 50h2v2h-2zM24 50h2v2h-2zM98 50h2v2h-2zM108 50h2v2h-2zM118 50h2v2h-2zM120 50h2v2h-2zM138 50h2v2h-2zM142 50h2v2h-2zM6 52h2v2h-2zM12 52h2v2h-2zM14 52h2v2h-2zM20 52h2v2h-2zM30 52h2v2h-2zM48 52h2v2h-2zM52 52h2v2h-2zM60 52h2v2h-2zM90 52h2v2h-2zM96 52h2v2h-2zM110 52h2v2h-2zM116 52h2v2h-2zM150 52h2v2h-2zM152 52h2v2h-2zM10 54h2v2h-2zM20 54h2v2h-2zM38 54h2v2h-2zM60 54h2v2h-2zM84 54h2v2h-2zM136 54h2v2h-2zM142 54h2v2h-2zM148 54h2v2h-2zM0 56h2v2h-2zM30 56h2v2h-2zM46 56h2v2h-2zM70 56h2v2h-2zM108 56h2v2h-2zM132 56h2v2h-2zM134 56h2v2h-2zM154 56h2v2h-2zM2 58h2v2h-2zM10 58h2v2h-2zM16 58h2v2h-2zM26 58h2v2h-2zM58 58h2v2h-2zM114 58h2v2h-2zM118 58h2v2h-2zM134 58h2v2h-2zM142 58h2v2h-2zM146 58h2v2h-2zM2 60h2v2h-2zM22 60h2v2h-2zM28 60h2v2h-2zM58 60h2v2h-2zM68 60h2v2h-2zM70 60h2v2h-2zM76 60h2v2h-2zM80 60h2v2h-2zM114 60h2v2h-2zM128 60h2v2h-2zM156 60h2v2h-2zM0 62h2v2h-2zM8 62h2v2h-2zM18 62h2v2h-2zM20 62h2v2h-2zM28 62h2v2h-2zM42 62h2v2h-2zM68 62h2v2h-2zM84 62h2v2h-2zM98 62h2v2h-2zM152 62h2v2h-2zM0 64h2v2h-2zM20 64h2v2h-2zM22 64h2v2h-2zM28 64h2v2h-2zM30 64h2v2h-2zM32 64h2v2h-2zM70 64h2v2h-2zM84 64h2v2h-2zM86 64h2v2h-2zM88 64h2v2h-2zM112 64h2v2h-2zM134 64h2v2h-2zM140 64h2v2h-2zM150 64h2v2h-2zM10 66h2v2h-2zM20 66h2v2h-2zM30 66h2v2h-2zM32 66h2v2h-2zM48 66h2v2h-2zM66 66h2v2h-2zM70 66h2v2h-2zM90 66h2v2h-2zM96 66h2v2h-2zM98 66h2v2h-2zM122 66h2v2h-2zM140 66h2v2h-2zM152 66h2v2h-2zM6 68h2v2h-2zM22 68h2v2h-2zM30 68h2v2h-2zM58 68h2v2h-2zM90 68h2v2h-2zM114 68h2v2h-2zM118 68h2v2h-2zM130 68h2v2h-2zM138 68h2v2h-2zM26 70h2v2h-2zM42 70h2v2h-2zM74 70h2v2h-2zM76 70h2v2h-2zM84 70h2v2h-2zM86 70h2v2h-2zM98 70h2v2h-2zM108 70h2v2h-2zM158 70h2v2h-2zM6 72h2v2h-2zM14 72h2v2h-2zM16 72h2v2h-2zM32 72h2v2h-2zM44 72h2v2h-2zM70 72h2v2h-2zM86 72h2v2h-2zM104 72h2v2h-2zM106 72h2v2h-2zM130 72h2v2h-2zM20 74h2v2h-2zM24 74h2v2h-2zM38 74h2v2h-2zM42 74h2v2h-2zM46 74h2v2h-2zM82 74h2v2h-2zM110 74h2v2h-2zM114 74h2v2h-2zM118 74h2v2h-2zM122 74h2v2h-2zM138 74h2v2h-2zM154 74h2v2h-2zM2 76h2v2h-2zM16 76h2v2h-2zM50 76h2v2h-2zM68 76h2v2h-2zM80 76h2v2h-2zM84 76h2v2h-2zM90 76h2v2h-2zM104 76h2v2h-2zM114 76h2v2h-2zM132 76h2v2h-2zM136 76h2v2h-2zM140 76h2v2h-2zM10 78h2v2h-2zM20 78h2v2h-2zM28 78h2v2h-2zM68 78h2v2h-2zM72 78h2v2h-2zM96 78h2v2h-2zM124 78h2v2h-2zM132 78h2v2h-2zM144 78h2v2h-2zM148 78h2v2h-2zM150 78h2v2h-2z" fill="white" fill-opacity="0.06"/><path d="M2 0h2v2h-2zM64 0h2v2h-2zM80 0h2v2h-2zM84 0h2v2h-2zM114 0h2v2h-2zM32 2h2v2h-2zM46 2h2v2h-2zM50 2h2v2h-2zM52 2h2v2h-2zM104 2h2v2h-2zM6 4h2v2h-2zM140 4h2v2h-2zM46 6h2v2h-2zM52 6h2v2h-2zM64 6h2v2h-2zM72 6h2v2h-2zM76 6h2v2h-2zM14 8h2v2h-2zM20 8h2v2h-2zM28 8h2v2h-2zM40 8h2v2h-2zM86 8h2v2h-2zM120 8h2v2h-2zM122 8h2v2h-2zM148 8h2v2h-2zM36 10h2v2h-2zM86 10h2v2h-2zM28 12h2v2h-2zM38 12h2v2h-2zM44 12h2v2h-2zM58 12h2v2h-2zM74 12h2v2h-2zM82 12h2v2h-2zM138 12h2v2h-2zM6 14h2v2h-2zM26 14h2v2h-2zM86 14h2v2h-2zM88 14h2v2h-2zM112 14h2v2h-2zM126 14h2v2h-2zM4 16h2v2h-2zM18 16h2v2h-2zM28 16h2v2h-2zM32 16h2v2h-2zM52 16h2v2h-2zM82 16h2v2h-2zM0 18h2v2h-2zM14 18h2v2h-2zM20 18h2v2h-2zM22 18h2v2h-2zM28 18h2v2h-2zM42 18h2v2h-2zM108 18h2v2h-2zM114 18h2v2h-2zM28 20h2v2h-2zM90 20h2v2h-2zM116 20h2v2h-2zM136 22h2v2h-2zM154 22h2v2h-2zM16 24h2v2h-2zM22 24h2v2h-2zM40 24h2v2h-2zM50 24h2v2h-2zM92 24h2v2h-2zM34 26h2v2h-2zM52 26h2v2h-2zM84 26h2v2h-2zM100 26h2v2h-2zM142 26h2v2h-2zM16 28h2v2h-2zM26 28h2v2h-2zM34 28h2v2h-2zM50 28h2v2h-2zM88 28h2v2h-2zM142 28h2v2h-2zM14 30h2v2h-2zM32 30h2v2h-2zM62 30h2v2h-2zM90 30h2v2h-2zM106 30h2v2h-2zM114 30h2v2h-2zM142 30h2v2h-2zM14 32h2v2h-2zM16 32h2v2h-2zM34 32h2v2h-2zM44 32h2v2h-2zM46 32h2v2h-2zM52 32h2v2h-2zM94 32h2v2h-2zM112 32h2v2h-2zM138 32h2v2h-2zM12 34h2v2h-2zM30 34h2v2h-2zM34 34h2v2h-2zM76 34h2v2h-2zM94 34h2v2h-2zM106 34h2v2h-2zM8 36h2v2h-2zM14 36h2v2h-2zM16 36h2v2h-2zM20 36h2v2h-2zM46 36h2v2h-2zM100 36h2v2h-2zM124 36h2v2h-2zM136 36h2v2h-2zM2 38h2v2h-2zM28 38h2v2h-2zM76 38h2v2h-2zM88 38h2v2h-2zM116 38h2v2h-2zM140 38h2v2h-2zM60 40h2v2h-2zM148 40h2v2h-2zM42 42h2v2h-2zM74 42h2v2h-2zM38 44h2v2h-2zM106 44h2v2h-2zM132 44h2v2h-2zM142 44h2v2h-2zM90 46h2v2h-2zM108 46h2v2h-2zM136 46h2v2h-2zM146 46h2v2h-2zM150 46h2v2h-2zM0 48h2v2h-2zM2 48h2v2h-2zM30 48h2v2h-2zM68 48h2v2h-2zM100 48h2v2h-2zM116 48h2v2h-2zM2 50h2v2h-2zM38 50h2v2h-2zM50 50h2v2h-2zM60 50h2v2h-2zM74 50h2v2h-2zM112 50h2v2h-2zM18 52h2v2h-2zM28 52h2v2h-2zM56 52h2v2h-2zM80 52h2v2h-2zM88 52h2v2h-2zM94 52h2v2h-2zM106 52h2v2h-2zM142 52h2v2h-2zM2 54h2v2h-2zM116 54h2v2h-2zM122 54h2v2h-2zM130 54h2v2h-2zM12 56h2v2h-2zM88 56h2v2h-2zM116 56h2v2h-2zM40 58h2v2h-2zM128 58h2v2h-2zM136 58h2v2h-2zM26 60h2v2h-2zM40 60h2v2h-2zM82 60h2v2h-2zM88 60h2v2h-2zM102 60h2v2h-2zM106 60h2v2h-2zM146 60h2v2h-2zM94 62h2v2h-2zM116 62h2v2h-2zM118 62h2v2h-2zM120 62h2v2h-2zM134 62h2v2h-2zM24 64h2v2h-2zM42 64h2v2h-2zM50 64h2v2h-2zM52 64h2v2h-2zM60 64h2v2h-2zM96 64h2v2h-2zM104 64h2v2h-2zM126 64h2v2h-2zM130 64h2v2h-2zM8 66h2v2h-2zM12 66h2v2h-2zM42 66h2v2h-2zM76 66h2v2h-2zM82 66h2v2h-2zM104 66h2v2h-2zM120 66h2v2h-2zM126 66h2v2h-2zM16 68h2v2h-2zM60 68h2v2h-2zM150 68h2v2h-2zM34 70h2v2h-2zM46 70h2v2h-2zM62 70h2v2h-2zM88 70h2v2h-2zM90 70h2v2h-2zM102 70h2v2h-2zM124 70h2v2h-2zM126 70h2v2h-2zM138 70h2v2h-2zM20 72h2v2h-2zM56 72h2v2h-2zM62 72h2v2h-2zM80 72h2v2h-2zM84 72h2v2h-2zM118 72h2v2h-2zM158 72h2v2h-2zM10 74h2v2h-2zM14 74h2v2h-2zM52 74h2v2h-2zM56 74h2v2h-2zM62 74h2v2h-2zM156 74h2v2h-2zM22 76h2v2h-2zM38 76h2v2h-2zM78 76h2v2h-2zM94 76h2v2h-2zM128 76h2v2h-2zM148 76h2v2h-2zM12 78h2v2h-2zM24 78h2v2h-2zM46 78h2v2h-2zM56 78h2v2h-2zM88 78h2v2h-2zM146 78h2v2h-2zM152 78h2v2h-2z" fill="white" fill-opacity="0.10"/><path d="M18 0h2v2h-2zM8 2h2v2h-2zM140 2h2v2h-2zM40 4h2v2h-2zM98 8h2v2h-2zM44 10h2v2h-2zM58 10h2v2h-2zM152 12h2v2h-2zM84 16h2v2h-2zM88 16h2v2h-2zM56 18h2v2h-2zM64 20h2v2h-2zM10 22h2v2h-2zM38 22h2v2h-2zM98 24h2v2h-2zM132 26h2v2h-2zM152 26h2v2h-2zM14 28h2v2h-2zM42 28h2v2h-2zM140 28h2v2h-2zM30 30h2v2h-2zM0 32h2v2h-2zM132 36h2v2h-2zM58 38h2v2h-2zM14 42h2v2h-2zM118 42h2v2h-2zM128 42h2v2h-2zM52 44h2v2h-2zM104 44h2v2h-2zM76 46h2v2h-2zM18 50h2v2h-2zM152 50h2v2h-2zM38 56h2v2h-2zM76 56h2v2h-2zM24 60h2v2h-2zM36 64h2v2h-2zM46 64h2v2h-2zM144 64h2v2h-2zM102 66h2v2h-2zM12 68h2v2h-2zM34 68h2v2h-2zM62 68h2v2h-2zM148 68h2v2h-2zM150 70h2v2h-2zM10 72h2v2h-2zM38 72h2v2h-2zM60 74h2v2h-2zM76 76h2v2h-2zM130 76h2v2h-2zM50 78h2v2h-2z" fill="black" fill-opacity="0.35"/></pattern></defs><rect x="0.00" y="0.00" width="2050.00" height="1403.00" fill="#000" />
<rect x="19" y="19" width="2012" height="1365" rx="42" ry="42" fill="#232629"/>
<rect x="19.5" y="19.5" width="2011.0" height="1364.0" rx="41.5" fill="none" stroke="#02024a" stroke-width="1"/>
<rect x="20.5" y="20.5" width="2009.0" height="1362.0" rx="40.5" fill="none" stroke="#033a35" stroke-width="1"/>
<rect x="21.5" y="21.5" width="2007.0" height="1360.0" rx="39.5" fill="none" stroke="#44403e" stroke-width="1"/>
<rect x="22.5" y="22.5" width="2005.0" height="1358.0" rx="38.5" fill="none" stroke="#353535" stroke-width="1"/>
<rect x="23.5" y="23.5" width="2003.0" height="1356.0" rx="37.5" fill="none" stroke="#262626" stroke-width="1"/>
<rect x="24.5" y="24.5" width="2001.0" height="1354.0" rx="36.5" fill="none" stroke="#1f1f1f" stroke-width="1"/>
<rect x="25.5" y="25.5" width="1999.0" height="1352.0" rx="35.5" fill="none" stroke="#1f1f1f" stroke-width="1"/>
<rect x="26.5" y="26.5" width="1997.0" height="1350.0" rx="34.5" fill="none" stroke="#181830" stroke-width="1"/>
<rect x="27.5" y="27.5" width="1995.0" height="1348.0" rx="33.5" fill="none" stroke="#2e2e2e" stroke-width="1"/>
<rect x="28.5" y="28.5" width="1993.0" height="1346.0" rx="32.5" fill="none" stroke="#252525" stroke-width="1"/>
<rect x="29.5" y="29.5" width="1991.0" height="1344.0" rx="31.5" fill="none" stroke="#1e1e2e" stroke-width="1"/>
<rect x="30.5" y="30.5" width="1989.0" height="1342.0" rx="30.5" fill="none" stroke="#2a2a2a" stroke-width="1"/>
<rect x="31.5" y="31.5" width="1987.0" height="1340.0" rx="29.5" fill="none" stroke="#2a2a2a" stroke-width="1"/>
<rect x="32.5" y="32.5" width="1985.0" height="1338.0" rx="28.5" fill="none" stroke="#22222a" stroke-width="1"/>
<rect x="33.5" y="33.5" width="1983.0" height="1336.0" rx="27.5" fill="none" stroke="#22222a" stroke-width="1"/>
<rect x="34.5" y="34.5" width="1981.0" height="1334.0" rx="26.5" fill="none" stroke="#1f2a2a" stroke-width="1"/>
<rect x="35.5" y="35.5" width="1979.0" height="1332.0" rx="25.5" fill="none" stroke="#1f2a2a" stroke-width="1"/>
<rect x="61" y="37" width="1928" height="49" rx="2" fill="url(#tb)"/>
<rect x="61.00" y="85.00" width="1928.00" height="1.00" fill="#3e444a" />
<rect x="61.00" y="86.00" width="1928.00" height="1256.00" fill="#eff0f1" />
<rect x="61.00" y="86.00" width="1.00" height="1256.00" fill="#fafafa" />
<rect x="69.00" y="86.00" width="1912.00" height="1248.00" fill="#efebe7" />
<g fill="none" stroke="#ff6c00">
<path d="M84.9 48.6 A8.9 8.9 0 0 1 98.4 48.6" stroke-width="2.1"/>
<path d="M87.6 51.0 A5.6 5.6 0 0 1 95.6 51.0" stroke-width="1.9"/>
<circle cx="91.6" cy="55.2" r="2.6" stroke-width="1.5"/>
<circle cx="98.3" cy="62" r="3.25" stroke-width="2.3"/>
<circle cx="90" cy="71" r="4.5" stroke-width="3.3"/>
<path d="M93.4 56.9 L95.6 59.3 M96.2 65.4 L94.2 67.6" stroke-width="1.3"/>
</g>
<text x="905.20" y="70.20" font-size="23.26" text-anchor="start" fill="#fcfcfc" textLength="239.30" lengthAdjust="spacingAndGlyphs" >FM audio signal receive</text>
<g fill="none" stroke="#fcfcfc" stroke-width="1.8">
<path d="M1868.2 57.3 L1877 66.1 L1885.8 57.3"/>
<path d="M1908.2 64.7 L1917 55.9 L1925.8 64.7"/>
</g>
<circle cx="1956.9" cy="60.9" r="14.3" fill="#fcfcfc"/>
<path d="M1950.1 54.1 L1963.7 67.7 M1963.7 54.1 L1950.1 67.7" stroke="#474d54" stroke-width="1.6"/>
<text x="102.80" y="139.20" font-size="20.35" text-anchor="start" fill="#000" textLength="183.20" lengthAdjust="spacingAndGlyphs" >Center Frequency:</text>
<rect x="103.5" y="147.5" width="916" height="64" rx="2" fill="#ebe7e3" stroke="#c9c5c1" stroke-width="1"/>
<circle cx="132.0" cy="179" r="10.2" fill="#fff" stroke="#9a9a9a" stroke-width="1"/>
<circle cx="132.0" cy="179" r="5" fill="#454545"/>
<text x="154.00" y="186.10" font-size="20.35" text-anchor="start" fill="#000" textLength="85.80" lengthAdjust="spacingAndGlyphs" >400 MHz</text>
<circle cx="428.8" cy="179" r="10.2" fill="#fff" stroke="#9a9a9a" stroke-width="1"/>
<text x="450.40" y="186.10" font-size="20.35" text-anchor="start" fill="#000" textLength="77.90" lengthAdjust="spacingAndGlyphs" >2.4 GHz</text>
<circle cx="727.1" cy="179" r="10.2" fill="#fff" stroke="#9a9a9a" stroke-width="1"/>
<text x="748.80" y="186.10" font-size="20.35" text-anchor="start" fill="#000" textLength="58.50" lengthAdjust="spacingAndGlyphs" >5 GHz</text>
<text x="1500.70" y="147.20" font-size="20.35" text-anchor="start" fill="#000" textLength="252.40" lengthAdjust="spacingAndGlyphs" >Max power (dB): 23.7405</text>
<text x="1500.70" y="197.80" font-size="20.35" text-anchor="start" fill="#000" textLength="301.70" lengthAdjust="spacingAndGlyphs" >Average power (dB): -24.0182</text>
<text x="1500.70" y="247.00" font-size="20.35" text-anchor="start" fill="#000" textLength="254.30" lengthAdjust="spacingAndGlyphs" >Min power (dB): -72.4217</text>
<rect x="232.00" y="283.00" width="309.00" height="414.00" fill="#fff" />
<rect x="232.00" y="283.00" width="309.00" height="2.00" fill="#a19e9a" />
<rect x="232.00" y="283.00" width="2.00" height="414.00" fill="#a19e9a" />
<path d="M238.5 285V697M286.5 285V697M334.5 285V697M382.5 285V697M430.5 285V697M478.5 285V697M526.5 285V697M234 650.5H541M234 570.5H541M234 490.5H541M234 409.5H541M234 329.5H541" stroke="#dcdcdc" stroke-width="1" stroke-dasharray="4 2" fill="none"/>
<path d="M238.5 489.0 L239.5 487.0 L240.5 486.2 L241.5 484.9 L242.5 484.6 L243.5 488.1 L244.5 488.2 L245.5 489.4 L246.5 489.9 L247.5 488.6 L248.5 489.2 L249.5 490.0 L250.5 491.6 L251.5 491.9 L252.5 490.2 L253.5 490.7 L254.5 493.1 L255.5 492.6 L256.5 492.8 L257.5 492.3 L258.5 493.1 L259.5 493.2 L260.5 494.5 L261.5 495.6 L262.5 494.7 L263.5 494.1 L264.5 494.9 L265.5 493.4 L266.5 493.9 L267.5 493.4 L268.5 493.7 L269.5 493.3 L270.5 493.4 L271.5 493.0 L272.5 495.2 L273.5 493.0 L274.5 493.0 L275.5 493.9 L276.5 490.4 L277.5 493.2 L278.5 491.2 L279.5 489.7 L280.5 490.5 L281.5 490.4 L282.5 491.2 L283.5 488.5 L284.5 489.5 L285.5 488.1 L286.5 486.7 L287.5 487.0 L288.5 488.6 L289.5 488.5 L290.5 488.6 L291.5 487.8 L292.5 487.5 L293.5 487.0 L294.5 488.0 L295.5 487.0 L296.5 486.4 L297.5 488.5 L298.5 484.8 L299.5 488.0 L300.5 485.7 L301.5 486.6 L302.5 489.2 L303.5 486.1 L304.5 486.6 L305.5 489.2 L306.5 486.5 L307.5 487.5 L308.5 488.8 L309.5 489.1 L310.5 489.6 L311.5 494.2 L312.5 491.1 L313.5 491.1 L314.5 491.0 L315.5 490.0 L316.5 490.3 L317.5 489.3 L318.5 492.5 L319.5 490.1 L320.5 493.4 L321.5 488.4 L322.5 491.8 L323.5 492.5 L324.5 492.9 L325.5 494.5 L326.5 492.8 L327.5 493.8 L328.5 493.4 L329.5 493.8 L330.5 495.5 L331.5 493.0 L332.5 494.1 L333.5 493.0 L334.5 497.0 L335.5 492.3 L336.5 494.8 L337.5 493.8 L338.5 494.1 L339.5 492.9 L340.5 490.8 L341.5 491.5 L342.5 492.8 L343.5 493.9 L344.5 491.2 L345.5 492.9 L346.5 492.9 L347.5 490.1 L348.5 491.9 L349.5 487.2 L350.5 486.8 L351.5 489.7 L352.5 488.1 L353.5 488.8 L354.5 488.4 L355.5 485.7 L356.5 488.1 L357.5 487.3 L358.5 485.2 L359.5 487.0 L360.5 486.9 L361.5 488.6 L362.5 485.3 L363.5 486.5 L364.5 486.1 L365.5 486.4 L366.5 488.5 L367.5 487.2 L368.5 486.4 L369.5 487.3 L370.5 488.2 L371.5 486.5 L372.5 487.5 L373.5 489.8 L374.5 489.4 L375.5 488.7 L376.5 487.7 L377.5 489.3 L378.5 488.1 L379.5 491.2 L380.5 490.9 L381.5 490.8 L382.5 489.8 L383.5 490.8 L384.5 493.0 L385.5 492.5 L386.5 492.0 L387.5 493.4 L388.5 492.4 L389.5 492.6 L390.5 493.0 L391.5 492.8 L392.5 490.6 L393.5 491.3 L394.5 494.6 L395.5 494.5 L396.5 492.8 L397.5 492.9 L398.5 493.9 L399.5 493.5 L400.5 493.9 L401.5 492.9 L402.5 494.2 L403.5 495.2 L404.5 494.7 L405.5 494.5 L406.5 492.5 L407.5 493.1 L408.5 491.4 L409.5 492.4 L410.5 490.7 L411.5 490.2 L412.5 489.6 L413.5 490.8 L414.5 489.9 L415.5 489.5 L416.5 487.7 L417.5 488.7 L418.5 485.5 L419.5 489.6 L420.5 487.6 L421.5 487.7 L422.5 487.1 L423.5 485.3 L424.5 485.3 L425.5 486.7 L426.5 488.3 L427.5 485.3 L428.5 485.7 L429.5 486.5 L430.5 484.7 L431.5 484.7 L432.5 486.3 L433.5 486.8 L434.5 486.6 L435.5 488.9 L436.5 487.3 L437.5 488.1 L438.5 494.2 L439.5 490.1 L440.5 486.8 L441.5 488.5 L442.5 490.5 L443.5 488.1 L444.5 489.0 L445.5 488.9 L446.5 489.2 L447.5 489.8 L448.5 491.6 L449.5 493.2 L450.5 493.8 L451.5 492.4 L452.5 490.5 L453.5 492.9 L454.5 492.8 L455.5 493.8 L456.5 493.5 L457.5 491.8 L458.5 494.4 L459.5 491.7 L460.5 493.3 L461.5 494.4 L462.5 494.5 L463.5 495.8 L464.5 491.4 L465.5 494.2 L466.5 494.5 L467.5 493.2 L468.5 494.0 L469.5 491.9 L470.5 493.6 L471.5 493.1 L472.5 491.2 L473.5 491.2 L474.5 491.4 L475.5 490.5 L476.5 492.0 L477.5 490.7 L478.5 488.6 L479.5 491.1 L480.5 489.5 L481.5 488.9 L482.5 490.8 L483.5 487.5 L484.5 487.2 L485.5 488.2 L486.5 486.6 L487.5 493.7 L488.5 487.3 L489.5 486.4 L490.5 486.6 L491.5 488.2 L492.5 488.3 L493.5 485.7 L494.5 487.0 L495.5 486.1 L496.5 486.3 L497.5 488.3 L498.5 487.5 L499.5 488.3 L500.5 489.1 L501.5 486.8 L502.5 487.4 L503.5 487.9 L504.5 489.2 L505.5 488.3 L506.5 489.5 L507.5 490.4 L508.5 490.7 L509.5 490.3 L510.5 496.9 L511.5 488.8 L512.5 492.1 L513.5 491.7 L514.5 490.2 L515.5 491.4 L516.5 491.8 L517.5 490.7 L518.5 493.1 L519.5 492.2 L520.5 493.0 L521.5 494.4 L522.5 493.6 L523.5 494.5 L524.5 494.4 L525.5 494.1 L526.5 494.1 L527.5 496.1 L528.5 493.9 L529.5 495.8 L530.5 498.3 L531.5 494.6 L532.5 493.8 L533.5 492.6" fill="none" stroke="#1a1aff" stroke-width="1.1" stroke-linejoin="round"/>
<line x1="229.50" y1="289.00" x2="229.50" y2="690.50" stroke="#000" stroke-width="1" />
<path d="M225.5 670.5H229.5M221.5 650.5H229.5M225.5 630.5H229.5M223.5 610.5H229.5M225.5 590.5H229.5M221.5 570.5H229.5M225.5 550.5H229.5M223.5 530.5H229.5M225.5 510.5H229.5M221.5 490.5H229.5M225.5 469.5H229.5M223.5 449.5H229.5M225.5 429.5H229.5M221.5 409.5H229.5M225.5 389.5H229.5M223.5 369.5H229.5M225.5 349.5H229.5M221.5 329.5H229.5M225.5 309.5H229.5M223.5 289.5H229.5" stroke="#000" stroke-width="1" fill="none"/>
<text x="203.08" y="337.00" font-size="23.26" fill="#000" textLength="12.87" lengthAdjust="spacingAndGlyphs">4</text>
<text x="203.02" y="417.00" font-size="23.26" fill="#000" textLength="12.40" lengthAdjust="spacingAndGlyphs">2</text>
<text x="203.08" y="498.00" font-size="23.26" fill="#000" textLength="12.87" lengthAdjust="spacingAndGlyphs">0</text>
<text x="194.65" y="578.00" font-size="23.26" fill="#000" textLength="20.83" lengthAdjust="spacingAndGlyphs">-2</text>
<text x="194.62" y="658.00" font-size="23.26" fill="#000" textLength="21.35" lengthAdjust="spacingAndGlyphs">-4</text>
<line x1="238.00" y1="699.50" x2="533.50" y2="699.50" stroke="#000" stroke-width="1" />
<path d="M238.5 699.0V707.5M250.5 699.0V703.5M262.5 699.0V705.5M274.5 699.0V703.5M286.5 699.0V707.5M298.5 699.0V703.5M310.5 699.0V705.5M322.5 699.0V703.5M334.5 699.0V707.5M346.5 699.0V703.5M358.5 699.0V705.5M370.5 699.0V703.5M382.5 699.0V707.5M394.5 699.0V703.5M406.5 699.0V705.5M418.5 699.0V703.5M430.5 699.0V707.5M442.5 699.0V703.5M454.5 699.0V705.5M466.5 699.0V703.5M478.5 699.0V707.5M490.5 699.0V703.5M502.5 699.0V705.5M514.5 699.0V703.5M526.5 699.0V707.5" stroke="#000" stroke-width="1" fill="none"/>
<text x="232.06" y="729.00" font-size="23.26" fill="#000" textLength="12.87" lengthAdjust="spacingAndGlyphs">0</text>
<text x="280.00" y="729.00" font-size="23.26" fill="#000" textLength="12.40" lengthAdjust="spacingAndGlyphs">2</text>
<text x="328.06" y="729.00" font-size="23.26" fill="#000" textLength="12.87" lengthAdjust="spacingAndGlyphs">4</text>
<text x="375.83" y="729.00" font-size="23.26" fill="#000" textLength="13.32" lengthAdjust="spacingAndGlyphs">6</text>
<text x="423.99" y="729.00" font-size="23.26" fill="#000" textLength="13.01" lengthAdjust="spacingAndGlyphs">8</text>
<text x="465.11" y="729.00" font-size="23.26" fill="#000" textLength="26.84" lengthAdjust="spacingAndGlyphs">10</text>
<text x="513.15" y="729.00" font-size="23.26" fill="#000" textLength="26.31" lengthAdjust="spacingAndGlyphs">12</text>
<text x="309.84" y="758.20" font-size="29.07" fill="#000" textLength="152.47" lengthAdjust="spacingAndGlyphs" font-weight="bold">Time (ms)</text>
<g transform="translate(143.10 568.00) rotate(-90)"><text x="-0.80" y="0.00" font-size="29.07" fill="#000" textLength="157.71" lengthAdjust="spacingAndGlyphs" font-weight="bold">Amplitude</text></g>
<rect x="232.00" y="805.00" width="309.00" height="413.00" fill="#fff" />
<rect x="232.00" y="805.00" width="309.00" height="2.00" fill="#a19e9a" />
<rect x="232.00" y="805.00" width="2.00" height="413.00" fill="#a19e9a" />
<path d="M268.5 807V1218M234 1171.5H541M327.5 807V1218M234 1091.5H541M386.5 807V1218M234 1011.5H541M445.5 807V1218M234 931.5H541M504.5 807V1218M234 851.5H541" stroke="#dcdcdc" stroke-width="1" stroke-dasharray="4 2" fill="none"/>
<path d="M383.2 1002.8H388.9L390.8 1004.2H392.9L394 1006V1015.8L392.9 1017L392.4 1018.8L391.5 1019H386.2L384.9 1017.2L383.2 1015.8L382.2 1014.3L381 1013V1006L382.2 1004.2Z" fill="#0000ff"/>
<line x1="229.50" y1="811.00" x2="229.50" y2="1211.00" stroke="#000" stroke-width="1" />
<path d="M225.5 1191.5H229.5M221.5 1171.5H229.5M225.5 1151.5H229.5M223.5 1131.5H229.5M225.5 1111.5H229.5M221.5 1091.5H229.5M225.5 1071.5H229.5M223.5 1051.5H229.5M225.5 1031.5H229.5M221.5 1011.5H229.5M225.5 991.5H229.5M223.5 971.5H229.5M225.5 951.5H229.5M221.5 931.5H229.5M225.5 911.5H229.5M223.5 891.5H229.5M225.5 871.5H229.5M221.5 851.5H229.5M225.5 831.5H229.5M223.5 811.5H229.5" stroke="#000" stroke-width="1" fill="none"/>
<text x="203.08" y="859.00" font-size="23.26" fill="#000" textLength="12.87" lengthAdjust="spacingAndGlyphs">4</text>
<text x="203.02" y="939.00" font-size="23.26" fill="#000" textLength="12.40" lengthAdjust="spacingAndGlyphs">2</text>
<text x="203.08" y="1019.00" font-size="23.26" fill="#000" textLength="12.87" lengthAdjust="spacingAndGlyphs">0</text>
<text x="194.65" y="1099.00" font-size="23.26" fill="#000" textLength="20.83" lengthAdjust="spacingAndGlyphs">-2</text>
<text x="194.62" y="1179.00" font-size="23.26" fill="#000" textLength="21.35" lengthAdjust="spacingAndGlyphs">-4</text>
<line x1="238.00" y1="1220.50" x2="534.00" y2="1220.50" stroke="#000" stroke-width="1" />
<path d="M238.5 1220.0V1226.5M253.5 1220.0V1224.5M268.5 1220.0V1228.5M282.5 1220.0V1224.5M297.5 1220.0V1226.5M312.5 1220.0V1224.5M327.5 1220.0V1228.5M341.5 1220.0V1224.5M356.5 1220.0V1226.5M371.5 1220.0V1224.5M386.5 1220.0V1228.5M400.5 1220.0V1224.5M415.5 1220.0V1226.5M430.5 1220.0V1224.5M445.5 1220.0V1228.5M459.5 1220.0V1224.5M474.5 1220.0V1226.5M489.5 1220.0V1224.5M504.5 1220.0V1228.5M518.5 1220.0V1224.5" stroke="#000" stroke-width="1" fill="none"/>
<text x="257.56" y="1250.00" font-size="23.26" fill="#000" textLength="21.35" lengthAdjust="spacingAndGlyphs">-4</text>
<text x="316.59" y="1250.00" font-size="23.26" fill="#000" textLength="20.83" lengthAdjust="spacingAndGlyphs">-2</text>
<text x="380.06" y="1250.00" font-size="23.26" fill="#000" textLength="12.87" lengthAdjust="spacingAndGlyphs">0</text>
<text x="439.00" y="1250.00" font-size="23.26" fill="#000" textLength="12.40" lengthAdjust="spacingAndGlyphs">2</text>
<text x="498.06" y="1250.00" font-size="23.26" fill="#000" textLength="12.87" lengthAdjust="spacingAndGlyphs">4</text>
<text x="319.86" y="1279.10" font-size="29.07" fill="#000" textLength="131.43" lengthAdjust="spacingAndGlyphs" font-weight="bold">In-phase</text>
<g transform="translate(143.50 1095.90) rotate(-90)"><text x="-1.33" y="0.00" font-size="29.07" fill="#000" textLength="174.13" lengthAdjust="spacingAndGlyphs" font-weight="bold">Quadrature</text></g>
<rect x="741.00" y="290.00" width="1192.00" height="407.00" fill="#fff" />
<rect x="741.00" y="290.00" width="1192.00" height="2.00" fill="#a19e9a" />
<rect x="741.00" y="290.00" width="2.00" height="407.00" fill="#a19e9a" />
<g filter="url(#wf)">
<rect x="743.00" y="292.00" width="1188.00" height="403.00" fill="rgb(67,67,67)" />
<rect x="743.00" y="292.00" width="22.00" height="403.00" fill="url(#edgeL)" />
<rect x="1913.00" y="292.00" width="18.00" height="403.00" fill="url(#edgeR)" />
<rect x="1077.9" y="292" width="518.3" height="2" fill="url(#band)" opacity="0.93"/>
<rect x="1105.6" y="294" width="462.8" height="2" fill="url(#band)" opacity="0.87"/>
<rect x="1041.3" y="296" width="591.4" height="2" fill="url(#band)" opacity="0.97"/>
<rect x="1123.3" y="298" width="427.4" height="2" fill="url(#band)" opacity="0.76"/>
<rect x="1131.2" y="300" width="411.6" height="2" fill="url(#band)" opacity="0.84"/>
<rect x="1133.5" y="302" width="407.0" height="2" fill="url(#band)" opacity="0.85"/>
<rect x="1067.3" y="304" width="539.3" height="2" fill="url(#band)" opacity="0.79"/>
<rect x="1064.4" y="306" width="545.1" height="2" fill="url(#band)" opacity="0.89"/>
<rect x="1066.5" y="308" width="541.0" height="2" fill="url(#band)" opacity="0.88"/>
<rect x="1033.0" y="310" width="608.0" height="2" fill="url(#band)" opacity="0.84"/>
<rect x="1029.5" y="312" width="614.9" height="2" fill="url(#band)" opacity="0.92"/>
<rect x="1007.2" y="314" width="659.6" height="2" fill="url(#band)" opacity="0.73"/>
<rect x="992.3" y="316" width="689.3" height="2" fill="url(#band)" opacity="0.94"/>
<rect x="1026.3" y="318" width="621.4" height="2" fill="url(#band)" opacity="0.76"/>
<rect x="1014.7" y="320" width="644.7" height="2" fill="url(#band)" opacity="0.98"/>
<rect x="930.9" y="322" width="812.2" height="2" fill="url(#band)" opacity="0.92"/>
<rect x="941.3" y="324" width="791.3" height="2" fill="url(#band)" opacity="0.96"/>
<rect x="1016.1" y="326" width="641.8" height="2" fill="url(#band)" opacity="0.70"/>
<rect x="976.9" y="328" width="720.3" height="2" fill="url(#band)" opacity="0.88"/>
<rect x="1018.4" y="330" width="637.2" height="2" fill="url(#band)" opacity="0.76"/>
<rect x="1012.0" y="332" width="650.0" height="2" fill="url(#band)" opacity="0.85"/>
<rect x="1031.6" y="334" width="610.8" height="2" fill="url(#band)" opacity="0.79"/>
<rect x="1004.7" y="336" width="664.5" height="2" fill="url(#band)" opacity="0.97"/>
<rect x="986.4" y="338" width="701.2" height="1" fill="url(#band)" opacity="0.79"/>
<rect x="1107.0" y="339" width="460.0" height="2" fill="url(#band)" opacity="0.85"/>
<rect x="1114.7" y="341" width="444.5" height="2" fill="url(#band)" opacity="0.75"/>
<rect x="1081.8" y="343" width="510.4" height="2" fill="url(#band)" opacity="0.69"/>
<rect x="1029.0" y="345" width="615.9" height="2" fill="url(#band)" opacity="0.82"/>
<rect x="999.8" y="347" width="674.4" height="2" fill="url(#band)" opacity="0.94"/>
<rect x="1001.9" y="349" width="670.1" height="2" fill="url(#band)" opacity="0.92"/>
<rect x="1043.4" y="351" width="587.2" height="2" fill="url(#band)" opacity="0.91"/>
<rect x="1047.8" y="353" width="578.4" height="2" fill="url(#band)" opacity="0.89"/>
<rect x="1049.6" y="355" width="574.7" height="2" fill="url(#band)" opacity="0.85"/>
<rect x="1084.1" y="357" width="505.7" height="2" fill="url(#band)" opacity="0.77"/>
<rect x="965.3" y="359" width="743.4" height="2" fill="url(#band)" opacity="0.77"/>
<rect x="1001.9" y="361" width="670.2" height="2" fill="url(#band)" opacity="0.91"/>
<rect x="997.7" y="363" width="678.7" height="2" fill="url(#band)" opacity="0.86"/>
<rect x="1014.3" y="365" width="645.5" height="2" fill="url(#band)" opacity="0.68"/>
<rect x="1082.7" y="367" width="508.6" height="2" fill="url(#band)" opacity="0.75"/>
<rect x="1072.4" y="369" width="529.3" height="2" fill="url(#band)" opacity="0.70"/>
<rect x="1075.3" y="371" width="523.4" height="2" fill="url(#band)" opacity="0.88"/>
<rect x="1067.7" y="373" width="538.7" height="2" fill="url(#band)" opacity="0.99"/>
<rect x="1003.2" y="375" width="667.6" height="2" fill="url(#band)" opacity="0.88"/>
<rect x="999.8" y="377" width="674.3" height="1" fill="url(#band)" opacity="0.78"/>
<rect x="937.9" y="378" width="798.2" height="2" fill="url(#band)" opacity="0.96"/>
<rect x="966.5" y="380" width="741.1" height="2" fill="url(#band)" opacity="0.86"/>
<rect x="950.0" y="382" width="774.0" height="2" fill="url(#band)" opacity="0.94"/>
<rect x="975.9" y="384" width="722.3" height="2" fill="url(#band)" opacity="0.98"/>
<rect x="979.7" y="386" width="714.7" height="2" fill="url(#band)" opacity="0.82"/>
<rect x="991.2" y="388" width="691.6" height="2" fill="url(#band)" opacity="0.75"/>
<rect x="1042.6" y="390" width="588.9" height="2" fill="url(#band)" opacity="0.93"/>
<rect x="958.1" y="392" width="757.8" height="2" fill="url(#band)" opacity="0.99"/>
<rect x="948.7" y="394" width="776.6" height="2" fill="url(#band)" opacity="0.88"/>
<rect x="1057.1" y="396" width="559.7" height="2" fill="url(#band)" opacity="0.86"/>
<rect x="937.7" y="398" width="798.5" height="2" fill="url(#band)" opacity="0.95"/>
<rect x="1000.8" y="400" width="672.3" height="2" fill="url(#band)" opacity="0.85"/>
<rect x="1038.9" y="402" width="596.2" height="2" fill="url(#band)" opacity="0.74"/>
<rect x="1059.4" y="404" width="555.1" height="2" fill="url(#band)" opacity="0.97"/>
<rect x="978.7" y="406" width="716.5" height="2" fill="url(#band)" opacity="0.72"/>
<rect x="1010.9" y="408" width="652.1" height="1" fill="url(#band)" opacity="0.67"/>
<rect x="1064.8" y="409" width="544.3" height="2" fill="url(#band)" opacity="0.93"/>
<rect x="1007.2" y="411" width="659.7" height="2" fill="url(#band)" opacity="0.86"/>
<rect x="1056.3" y="413" width="561.4" height="2" fill="url(#band)" opacity="0.91"/>
<rect x="967.3" y="415" width="739.4" height="2" fill="url(#band)" opacity="0.84"/>
<rect x="1083.0" y="417" width="508.0" height="2" fill="url(#band)" opacity="0.67"/>
<rect x="1081.4" y="419" width="511.3" height="2" fill="url(#band)" opacity="0.99"/>
<rect x="1021.6" y="421" width="630.9" height="2" fill="url(#band)" opacity="0.96"/>
<rect x="1070.0" y="423" width="534.0" height="2" fill="url(#band)" opacity="0.78"/>
<rect x="1001.8" y="425" width="670.3" height="2" fill="url(#band)" opacity="0.97"/>
<rect x="1047.7" y="427" width="578.6" height="2" fill="url(#band)" opacity="0.68"/>
<rect x="979.4" y="429" width="715.3" height="2" fill="url(#band)" opacity="0.79"/>
<rect x="995.4" y="431" width="683.2" height="2" fill="url(#band)" opacity="0.73"/>
<rect x="1001.4" y="433" width="671.1" height="2" fill="url(#band)" opacity="0.96"/>
<rect x="997.2" y="435" width="679.5" height="2" fill="url(#band)" opacity="0.82"/>
<rect x="997.3" y="437" width="679.4" height="2" fill="url(#band)" opacity="0.72"/>
<rect x="1051.2" y="439" width="571.6" height="2" fill="url(#band)" opacity="0.84"/>
<rect x="977.6" y="441" width="718.7" height="2" fill="url(#band)" opacity="0.73"/>
<rect x="977.3" y="443" width="719.5" height="2" fill="url(#band)" opacity="0.95"/>
<rect x="965.3" y="445" width="743.4" height="2" fill="url(#band)" opacity="0.82"/>
<rect x="1065.4" y="447" width="543.2" height="1" fill="url(#band)" opacity="0.77"/>
<rect x="919.9" y="448" width="834.2" height="2" fill="url(#band)" opacity="0.99"/>
<rect x="939.8" y="450" width="794.3" height="2" fill="url(#band)" opacity="0.86"/>
<rect x="1003.4" y="452" width="667.3" height="2" fill="url(#band)" opacity="0.96"/>
<rect x="913.1" y="454" width="847.8" height="2" fill="url(#band)" opacity="0.70"/>
<rect x="1014.3" y="456" width="645.3" height="2" fill="url(#band)" opacity="0.96"/>
<rect x="916.8" y="458" width="840.5" height="2" fill="url(#band)" opacity="0.80"/>
<rect x="1004.6" y="460" width="664.9" height="2" fill="url(#band)" opacity="0.84"/>
<rect x="964.4" y="462" width="745.1" height="2" fill="url(#band)" opacity="0.70"/>
<rect x="918.5" y="464" width="837.0" height="2" fill="url(#band)" opacity="0.87"/>
<rect x="928.1" y="466" width="817.8" height="2" fill="url(#band)" opacity="0.77"/>
<rect x="898.7" y="468" width="876.6" height="2" fill="url(#band)" opacity="0.94"/>
<rect x="994.7" y="470" width="684.5" height="2" fill="url(#band)" opacity="0.99"/>
<rect x="939.6" y="472" width="794.9" height="2" fill="url(#band)" opacity="0.96"/>
<rect x="1040.6" y="474" width="592.7" height="2" fill="url(#band)" opacity="0.67"/>
<rect x="933.1" y="476" width="807.9" height="2" fill="url(#band)" opacity="0.80"/>
<rect x="967.9" y="478" width="738.2" height="2" fill="url(#band)" opacity="0.73"/>
<rect x="896.8" y="480" width="880.5" height="2" fill="url(#band)" opacity="0.86"/>
<rect x="919.7" y="482" width="834.5" height="2" fill="url(#band)" opacity="0.68"/>
<rect x="973.8" y="484" width="726.5" height="2" fill="url(#band)" opacity="0.68"/>
<rect x="911.2" y="486" width="851.6" height="2" fill="url(#band)" opacity="0.85"/>
<rect x="1037.1" y="488" width="599.8" height="2" fill="url(#band)" opacity="0.69"/>
<rect x="964.5" y="490" width="744.9" height="2" fill="url(#band)" opacity="0.68"/>
<rect x="1019.3" y="492" width="635.4" height="2" fill="url(#band)" opacity="0.84"/>
<rect x="970.9" y="494" width="732.3" height="2" fill="url(#band)" opacity="0.89"/>
<rect x="951.9" y="496" width="770.2" height="2" fill="url(#band)" opacity="0.82"/>
<rect x="952.2" y="498" width="769.6" height="2" fill="url(#band)" opacity="0.73"/>
<rect x="1005.2" y="500" width="663.7" height="2" fill="url(#band)" opacity="0.95"/>
<rect x="1024.0" y="502" width="625.9" height="2" fill="url(#band)" opacity="0.76"/>
<rect x="1010.2" y="504" width="653.7" height="2" fill="url(#band)" opacity="0.86"/>
<rect x="1047.6" y="506" width="578.9" height="2" fill="url(#band)" opacity="0.65"/>
<rect x="976.4" y="508" width="721.1" height="2" fill="url(#band)" opacity="0.73"/>
<rect x="958.0" y="510" width="758.0" height="2" fill="url(#band)" opacity="0.95"/>
<rect x="973.0" y="512" width="728.0" height="2" fill="url(#band)" opacity="0.92"/>
<rect x="1000.8" y="514" width="672.4" height="2" fill="url(#band)" opacity="0.66"/>
<rect x="993.6" y="516" width="686.8" height="2" fill="url(#band)" opacity="0.82"/>
<rect x="970.2" y="518" width="733.6" height="2" fill="url(#band)" opacity="0.72"/>
<rect x="1025.0" y="520" width="624.0" height="2" fill="url(#band)" opacity="0.95"/>
<rect x="1019.6" y="522" width="634.8" height="2" fill="url(#band)" opacity="0.83"/>
<rect x="919.9" y="524" width="834.2" height="2" fill="url(#band)" opacity="0.78"/>
<rect x="1037.2" y="526" width="599.5" height="2" fill="url(#band)" opacity="0.92"/>
<rect x="974.7" y="528" width="724.7" height="2" fill="url(#band)" opacity="0.90"/>
<rect x="1052.6" y="530" width="568.9" height="2" fill="url(#band)" opacity="0.84"/>
<rect x="1058.2" y="532" width="557.7" height="2" fill="url(#band)" opacity="0.77"/>
<rect x="954.0" y="534" width="765.9" height="2" fill="url(#band)" opacity="0.68"/>
<rect x="1015.1" y="536" width="643.9" height="2" fill="url(#band)" opacity="1.00"/>
<rect x="914.7" y="538" width="844.6" height="2" fill="url(#band)" opacity="0.86"/>
<rect x="949.6" y="540" width="774.7" height="2" fill="url(#band)" opacity="0.90"/>
<rect x="989.7" y="542" width="694.6" height="2" fill="url(#band)" opacity="0.96"/>
<rect x="1033.2" y="544" width="607.6" height="2" fill="url(#band)" opacity="0.96"/>
<rect x="1052.6" y="546" width="568.9" height="2" fill="url(#band)" opacity="0.97"/>
<rect x="958.5" y="548" width="757.0" height="2" fill="url(#band)" opacity="0.85"/>
<rect x="959.2" y="550" width="755.7" height="2" fill="url(#band)" opacity="0.85"/>
<rect x="943.1" y="552" width="787.9" height="2" fill="url(#band)" opacity="0.71"/>
<rect x="983.4" y="554" width="707.2" height="2" fill="url(#band)" opacity="0.97"/>
<rect x="921.2" y="556" width="831.7" height="2" fill="url(#band)" opacity="0.76"/>
<rect x="1021.4" y="558" width="631.2" height="2" fill="url(#band)" opacity="0.98"/>
<rect x="1007.5" y="560" width="658.9" height="2" fill="url(#band)" opacity="0.67"/>
<rect x="952.7" y="562" width="768.5" height="2" fill="url(#band)" opacity="0.84"/>
<rect x="949.7" y="564" width="774.6" height="1" fill="url(#band)" opacity="0.86"/>
<rect x="984.5" y="565" width="704.9" height="2" fill="url(#band)" opacity="0.84"/>
<rect x="1015.7" y="567" width="642.6" height="2" fill="url(#band)" opacity="0.98"/>
<rect x="959.6" y="569" width="754.9" height="2" fill="url(#band)" opacity="0.95"/>
<rect x="925.9" y="571" width="822.2" height="2" fill="url(#band)" opacity="0.77"/>
<rect x="922.3" y="573" width="829.4" height="2" fill="url(#band)" opacity="0.97"/>
<rect x="983.7" y="575" width="706.6" height="2" fill="url(#band)" opacity="0.88"/>
<rect x="1041.7" y="577" width="590.5" height="2" fill="url(#band)" opacity="0.94"/>
<rect x="1033.1" y="579" width="607.8" height="2" fill="url(#band)" opacity="0.87"/>
<rect x="1040.0" y="581" width="593.9" height="2" fill="url(#band)" opacity="0.68"/>
<rect x="968.4" y="583" width="737.1" height="2" fill="url(#band)" opacity="0.86"/>
<rect x="958.7" y="585" width="756.7" height="2" fill="url(#band)" opacity="0.95"/>
<rect x="913.0" y="587" width="848.0" height="2" fill="url(#band)" opacity="0.69"/>
<rect x="965.1" y="589" width="743.7" height="2" fill="url(#band)" opacity="0.89"/>
<rect x="962.3" y="591" width="749.5" height="2" fill="url(#band)" opacity="0.88"/>
<rect x="976.1" y="593" width="721.8" height="2" fill="url(#band)" opacity="0.97"/>
<rect x="991.7" y="595" width="690.5" height="2" fill="url(#band)" opacity="0.87"/>
<rect x="956.3" y="597" width="761.4" height="2" fill="url(#band)" opacity="0.69"/>
<rect x="994.7" y="599" width="684.6" height="2" fill="url(#band)" opacity="0.70"/>
<rect x="1038.3" y="601" width="597.3" height="2" fill="url(#band)" opacity="0.61"/>
<rect x="1027.7" y="603" width="618.6" height="2" fill="url(#band)" opacity="0.76"/>
<rect x="982.2" y="605" width="709.6" height="2" fill="url(#band)" opacity="0.89"/>
<rect x="936.5" y="607" width="800.9" height="2" fill="url(#band)" opacity="0.86"/>
<rect x="926.5" y="609" width="820.9" height="2" fill="url(#band)" opacity="0.83"/>
<rect x="948.3" y="611" width="777.4" height="2" fill="url(#band)" opacity="0.88"/>
<rect x="966.2" y="613" width="741.5" height="2" fill="url(#band)" opacity="0.78"/>
<rect x="1103.3" y="615" width="467.4" height="2" fill="url(#band)" opacity="0.94"/>
<rect x="1169.1" y="617" width="335.8" height="2" fill="url(#band)" opacity="0.88"/>
<rect x="877.0" y="619" width="920.1" height="2" fill="url(#band)" opacity="0.67"/>
<rect x="988.0" y="621" width="698.0" height="2" fill="url(#band)" opacity="0.93"/>
<rect x="1030.2" y="623" width="613.5" height="2" fill="url(#band)" opacity="0.94"/>
<rect x="944.7" y="625" width="784.7" height="2" fill="url(#band)" opacity="0.93"/>
<rect x="948.3" y="627" width="777.5" height="2" fill="url(#band)" opacity="0.99"/>
<rect x="981.0" y="629" width="711.9" height="2" fill="url(#band)" opacity="0.89"/>
<rect x="1028.4" y="631" width="617.2" height="2" fill="url(#band)" opacity="0.88"/>
<rect x="969.3" y="633" width="735.3" height="2" fill="url(#band)" opacity="1.00"/>
<rect x="885.0" y="635" width="904.0" height="2" fill="url(#band)" opacity="0.72"/>
<rect x="1029.9" y="637" width="614.3" height="2" fill="url(#band)" opacity="0.71"/>
<rect x="1005.7" y="639" width="662.7" height="2" fill="url(#band)" opacity="0.93"/>
<rect x="949.4" y="641" width="775.3" height="2" fill="url(#band)" opacity="0.87"/>
<rect x="989.9" y="648" width="694.3" height="2" fill="url(#band)" opacity="0.62"/>
<rect x="1000.6" y="650" width="672.9" height="2" fill="url(#band)" opacity="1.00"/>
<rect x="937.1" y="652" width="799.8" height="2" fill="url(#band)" opacity="0.89"/>
<rect x="1029.6" y="654" width="614.7" height="2" fill="url(#band)" opacity="0.98"/>
<rect x="995.9" y="656" width="682.3" height="2" fill="url(#band)" opacity="0.90"/>
<rect x="1028.7" y="658" width="616.7" height="2" fill="url(#band)" opacity="0.80"/>
<rect x="1007.6" y="660" width="658.8" height="2" fill="url(#band)" opacity="0.83"/>
<rect x="1179.4" y="662" width="315.3" height="2" fill="url(#band)" opacity="0.91"/>
<rect x="1167.1" y="664" width="339.8" height="2" fill="url(#band)" opacity="0.90"/>
<rect x="1129.7" y="666" width="414.5" height="2" fill="url(#band)" opacity="0.92"/>
<rect x="1156.9" y="668" width="360.1" height="2" fill="url(#band)" opacity="0.79"/>
<rect x="1118.4" y="670" width="437.1" height="2" fill="url(#band)" opacity="0.83"/>
<rect x="1168.5" y="672" width="336.9" height="2" fill="url(#band)" opacity="0.98"/>
<rect x="1180.1" y="674" width="313.8" height="2" fill="url(#band)" opacity="0.97"/>
<rect x="1156.9" y="676" width="360.2" height="2" fill="url(#band)" opacity="0.82"/>
<rect x="1099.9" y="678" width="474.2" height="2" fill="url(#band)" opacity="0.84"/>
<rect x="1121.7" y="680" width="430.6" height="2" fill="url(#band)" opacity="0.84"/>
<rect x="1105.3" y="682" width="463.4" height="2" fill="url(#band)" opacity="0.93"/>
<rect x="1141.3" y="684" width="391.5" height="2" fill="url(#band)" opacity="0.69"/>
<rect x="1151.0" y="686" width="372.0" height="2" fill="url(#band)" opacity="0.86"/>
<rect x="1157.6" y="688" width="358.8" height="2" fill="url(#band)" opacity="0.87"/>
<rect x="1163.8" y="690" width="346.4" height="2" fill="url(#band)" opacity="0.86"/>
<rect x="1137.3" y="692" width="399.3" height="2" fill="url(#band)" opacity="0.92"/>
<rect x="1119.3" y="694" width="435.5" height="1" fill="url(#band)" opacity="0.93"/>
<rect x="1277.65" y="292.00" width="118.70" height="403.00" fill="url(#core)" />
<rect x="1291.00" y="662.00" width="92.00" height="33.00" fill="url(#core2)" />
<rect x="1075.00" y="644.00" width="515.00" height="3.00" fill="rgb(70,70,70)" />
<rect x="1075.00" y="616.00" width="246.00" height="2.00" fill="rgb(83,83,83)" />
<rect x="1354.00" y="616.00" width="236.00" height="2.00" fill="rgb(83,83,83)" />
<rect x="793.60" y="292.00" width="36.00" height="403.00" fill="url(#skirt)" />
<rect x="824.40" y="292.00" width="40.00" height="403.00" fill="url(#skirt)" />
<rect x="1804.80" y="292.00" width="50.00" height="403.00" fill="url(#skirt)" />
<rect x="742.00" y="292.00" width="40.00" height="403.00" fill="url(#skirt)" />
<rect x="743.00" y="292.00" width="1188.00" height="403.00" fill="url(#bn)" />
</g>
<rect x="810.10" y="292.00" width="3.00" height="403.00" fill="#a8ff57" opacity="0.85"/>
<rect x="842.90" y="292.00" width="3.00" height="403.00" fill="#bcff43" opacity="0.85"/>
<rect x="1828.30" y="292.00" width="3.00" height="403.00" fill="#c8ff37" opacity="0.85"/>
<rect x="1335.50" y="292.00" width="3.00" height="403.00" fill="#ff0000" />
<line x1="738.50" y1="292.00" x2="738.50" y2="695.00" stroke="#000" stroke-width="1" />
<path d="M730.5 694.5H738.5M734.5 674.5H738.5M734.5 654.5H738.5M734.5 634.5H738.5M734.5 613.5H738.5M730.5 593.5H738.5M734.5 573.5H738.5M734.5 553.5H738.5M734.5 533.5H738.5M734.5 513.5H738.5M730.5 493.5H738.5M734.5 473.5H738.5M734.5 453.5H738.5M734.5 433.5H738.5M734.5 413.5H738.5M730.5 392.5H738.5M734.5 372.5H738.5M734.5 352.5H738.5M734.5 332.5H738.5M734.5 312.5H738.5M730.5 292.5H738.5" stroke="#000" stroke-width="1" fill="none"/>
<text x="617.13" y="301.00" font-size="23.26" fill="#000" textLength="107.60" lengthAdjust="spacingAndGlyphs">2.00e+01</text>
<text x="617.27" y="401.00" font-size="23.26" fill="#000" textLength="107.45" lengthAdjust="spacingAndGlyphs">1.50e+01</text>
<text x="617.27" y="502.00" font-size="23.26" fill="#000" textLength="107.45" lengthAdjust="spacingAndGlyphs">1.00e+01</text>
<text x="617.48" y="602.00" font-size="23.26" fill="#000" textLength="107.56" lengthAdjust="spacingAndGlyphs">5.00e+00</text>
<text x="617.25" y="703.00" font-size="23.26" fill="#000" textLength="107.79" lengthAdjust="spacingAndGlyphs">0.00e+00</text>
<line x1="743.00" y1="699.50" x2="1930.50" y2="699.50" stroke="#000" stroke-width="1" />
<path d="M743.5 699.0V705.5M802.5 699.0V703.5M862.5 699.0V707.5M921.5 699.0V703.5M980.5 699.0V705.5M1040.5 699.0V703.5M1099.5 699.0V707.5M1158.5 699.0V703.5M1218.5 699.0V705.5M1277.5 699.0V703.5M1337.5 699.0V707.5M1396.5 699.0V703.5M1455.5 699.0V705.5M1515.5 699.0V703.5M1574.5 699.0V707.5M1633.5 699.0V703.5M1693.5 699.0V705.5M1752.5 699.0V703.5M1811.5 699.0V707.5M1871.5 699.0V703.5" stroke="#000" stroke-width="1" fill="none"/>
<text x="817.85" y="729.00" font-size="23.26" fill="#000" textLength="89.54" lengthAdjust="spacingAndGlyphs">396.000</text>
<text x="1054.85" y="729.00" font-size="23.26" fill="#000" textLength="89.54" lengthAdjust="spacingAndGlyphs">398.000</text>
<text x="1292.62" y="729.00" font-size="23.26" fill="#000" textLength="89.77" lengthAdjust="spacingAndGlyphs">400.000</text>
<text x="1529.62" y="729.00" font-size="23.26" fill="#000" textLength="89.77" lengthAdjust="spacingAndGlyphs">402.000</text>
<text x="1766.62" y="729.00" font-size="23.26" fill="#000" textLength="89.77" lengthAdjust="spacingAndGlyphs">404.000</text>
<text x="1206.15" y="758.40" font-size="29.07" fill="#000" textLength="259.15" lengthAdjust="spacingAndGlyphs" font-weight="bold">Frequency (MHz)</text>
<g transform="translate(606.80 554.80) rotate(-90)"><text x="-0.36" y="0.00" font-size="29.07" fill="#000" textLength="124.18" lengthAdjust="spacingAndGlyphs" font-weight="bold">Time (s)</text></g>
<rect x="696.00" y="805.00" width="1237.00" height="413.00" fill="#fff" />
<rect x="696.00" y="805.00" width="1237.00" height="2.00" fill="#a19e9a" />
<rect x="696.00" y="805.00" width="2.00" height="413.00" fill="#a19e9a" />
<path d="M824.5 807V1218M1069.5 807V1218M1314.5 807V1218M1559.5 807V1218M1804.5 807V1218M698 1211.5H1933M698 1157.5H1933M698 1104.5H1933M698 1051.5H1933M698 998.5H1933M698 944.5H1933M698 891.5H1933M698 838.5H1933" stroke="#dcdcdc" stroke-width="1" stroke-dasharray="4 2" fill="none"/>
<line x1="698" y1="838.5" x2="1931" y2="838.5" stroke="#00e5ee" stroke-width="1.2"/>
<line x1="698" y1="838.5" x2="1931" y2="838.5" stroke="#8b0000" stroke-width="1.2" stroke-dasharray="1 3"/>
<path d="M708.6 1146.1 L709.8 1126.5 L711.0 1114.1 L712.2 1111.8 L713.4 1113.6 L714.5 1138.4 L715.7 1130.5 L716.9 1117.2 L718.1 1115.7 L719.3 1132.7 L720.5 1117.6 L721.7 1155.9 L722.8 1120.4 L724.0 1150.4 L725.2 1123.1 L726.4 1106.3 L727.6 1106.0 L728.8 1112.6 L730.0 1114.1 L731.1 1101.4 L732.3 1109.6 L733.5 1136.9 L734.7 1128.4 L735.9 1134.1 L737.1 1121.0 L738.2 1123.0 L739.4 1114.9 L740.6 1123.9 L741.8 1122.8 L743.0 1115.9 L744.2 1145.8 L745.4 1124.8 L746.5 1123.1 L747.7 1124.6 L748.9 1134.5 L750.1 1124.3 L751.3 1136.0 L752.5 1111.6 L753.6 1116.6 L754.8 1112.1 L756.0 1114.9 L757.2 1123.9 L758.4 1118.3 L759.6 1108.7 L760.8 1098.9 L761.9 1095.9 L763.1 1109.1 L764.3 1126.6 L765.5 1101.5 L766.7 1091.5 L767.9 1094.6 L769.1 1090.9 L770.2 1081.6 L771.4 1083.7 L772.6 1073.7 L773.8 1074.7 L775.0 1089.2 L776.2 1106.0 L777.3 1125.1 L778.5 1114.4 L779.7 1115.7 L780.9 1117.5 L782.1 1127.2 L783.3 1134.4 L784.5 1114.0 L785.6 1121.3 L786.8 1119.3 L788.0 1110.7 L789.2 1102.9 L790.4 1103.3 L791.6 1112.2 L792.8 1083.4 L793.9 1079.4 L795.1 1085.9 L796.3 1105.8 L797.5 1134.2 L798.7 1118.4 L799.9 1097.0 L801.0 1078.3 L802.2 1105.2 L803.4 1080.1 L804.6 1068.3 L805.8 1060.1 L807.0 1067.6 L808.2 1078.1 L809.3 1093.7 L810.5 1099.5 L811.7 1095.4 L812.9 1112.1 L814.1 1102.9 L815.3 1108.0 L816.4 1114.5 L817.6 1129.7 L818.8 1113.7 L820.0 1115.1 L821.2 1113.1 L822.4 1124.5 L823.6 1110.3 L824.7 1128.6 L825.9 1144.8 L827.1 1123.2 L828.3 1130.6 L829.5 1149.6 L830.7 1144.8 L831.9 1127.3 L833.0 1119.7 L834.2 1128.3 L835.4 1164.7 L836.6 1129.1 L837.8 1133.8 L839.0 1139.7 L840.1 1133.4 L841.3 1132.4 L842.5 1137.6 L843.7 1134.8 L844.9 1122.6 L846.1 1120.2 L847.3 1119.3 L848.4 1116.6 L849.6 1135.9 L850.8 1125.9 L852.0 1118.7 L853.2 1119.9 L854.4 1135.1 L855.5 1135.6 L856.7 1145.5 L857.9 1149.8 L859.1 1123.4 L860.3 1124.3 L861.5 1146.6 L862.7 1123.5 L863.8 1119.1 L865.0 1114.7 L866.2 1135.2 L867.4 1152.7 L868.6 1184.0 L869.8 1142.9 L871.0 1135.9 L872.1 1117.4 L873.3 1113.2 L874.5 1131.0 L875.7 1147.6 L876.9 1142.3 L878.1 1154.7 L879.2 1171.8 L880.4 1144.3 L881.6 1134.7 L882.8 1129.9 L884.0 1108.9 L885.2 1106.9 L886.4 1124.2 L887.5 1129.8 L888.7 1116.0 L889.9 1142.8 L891.1 1132.6 L892.3 1127.0 L893.5 1120.8 L894.7 1138.5 L895.8 1165.6 L897.0 1162.7 L898.2 1145.2 L899.4 1130.0 L900.6 1159.4 L901.8 1167.5 L902.9 1127.2 L904.1 1129.8 L905.3 1134.4 L906.5 1131.5 L907.7 1135.9 L908.9 1118.3 L910.1 1118.4 L911.2 1133.1 L912.4 1123.8 L913.6 1131.5 L914.8 1166.1 L916.0 1133.2 L917.2 1117.3 L918.3 1133.3 L919.5 1146.7 L920.7 1145.4 L921.9 1131.2 L923.1 1128.1 L924.3 1139.1 L925.5 1155.5 L926.6 1152.8 L927.8 1179.0 L929.0 1140.4 L930.2 1142.8 L931.4 1127.1 L932.6 1119.6 L933.8 1115.1 L934.9 1122.1 L936.1 1127.5 L937.3 1127.2 L938.5 1130.4 L939.7 1122.1 L940.9 1115.3 L942.0 1154.8 L943.2 1132.0 L944.4 1131.4 L945.6 1148.3 L946.8 1145.4 L948.0 1130.8 L949.2 1140.9 L950.3 1123.5 L951.5 1126.4 L952.7 1132.2 L953.9 1128.5 L955.1 1117.6 L956.3 1119.4 L957.5 1113.0 L958.6 1110.3 L959.8 1118.0 L961.0 1121.5 L962.2 1137.2 L963.4 1137.9 L964.6 1116.0 L965.7 1113.3 L966.9 1135.6 L968.1 1133.4 L969.3 1145.1 L970.5 1132.0 L971.7 1126.1 L972.9 1151.9 L974.0 1136.4 L975.2 1115.4 L976.4 1123.1 L977.6 1143.4 L978.8 1123.9 L980.0 1116.1 L981.1 1150.8 L982.3 1128.3 L983.5 1136.9 L984.7 1145.3 L985.9 1127.1 L987.1 1137.1 L988.3 1127.4 L989.4 1134.9 L990.6 1148.8 L991.8 1203.5 L993.0 1146.5 L994.2 1149.6 L995.4 1132.6 L996.6 1122.6 L997.7 1123.5 L998.9 1115.5 L1000.1 1133.9 L1001.3 1132.8 L1002.5 1148.9 L1003.7 1124.2 L1004.8 1121.3 L1006.0 1125.5 L1007.2 1127.5 L1008.4 1121.9 L1009.6 1125.2 L1010.8 1134.2 L1012.0 1125.9 L1013.1 1141.2 L1014.3 1136.5 L1015.5 1137.4 L1016.7 1130.6 L1017.9 1123.0 L1019.1 1120.4 L1020.3 1128.5 L1021.4 1127.0 L1022.6 1133.1 L1023.8 1157.9 L1025.0 1164.7 L1026.2 1135.4 L1027.4 1127.0 L1028.5 1132.4 L1029.7 1134.8 L1030.9 1129.3 L1032.1 1138.7 L1033.3 1118.9 L1034.5 1127.9 L1035.7 1107.0 L1036.8 1126.8 L1038.0 1149.2 L1039.2 1119.8 L1040.4 1122.3 L1041.6 1146.3 L1042.8 1128.3 L1043.9 1115.8 L1045.1 1122.8 L1046.3 1124.6 L1047.5 1146.4 L1048.7 1117.7 L1049.9 1116.9 L1051.1 1147.5 L1052.2 1145.5 L1053.4 1142.9 L1054.6 1135.4 L1055.8 1142.9 L1057.0 1150.2 L1058.2 1136.7 L1059.4 1118.0 L1060.5 1131.5 L1061.7 1170.9 L1062.9 1140.0 L1064.1 1129.8 L1065.3 1150.2 L1066.5 1138.6 L1067.6 1136.6 L1068.8 1155.0 L1070.0 1157.7 L1071.2 1136.8 L1072.4 1138.4 L1073.6 1138.6 L1074.8 1139.1 L1075.9 1133.5 L1077.1 1125.4 L1078.3 1129.6 L1079.5 1124.7 L1080.7 1113.7 L1081.9 1113.7 L1083.1 1109.8 L1084.2 1123.5 L1085.4 1131.1 L1086.6 1180.3 L1087.8 1157.0 L1089.0 1123.4 L1090.2 1113.0 L1091.3 1124.2 L1092.5 1134.4 L1093.7 1147.3 L1094.9 1143.4 L1096.1 1116.2 L1097.3 1114.2 L1098.5 1145.7 L1099.6 1140.4 L1100.8 1136.5 L1102.0 1120.0 L1103.2 1124.7 L1104.4 1128.2 L1105.6 1120.1 L1106.7 1141.1 L1107.9 1134.0 L1109.1 1111.4 L1110.3 1103.4 L1111.5 1112.1 L1112.7 1114.0 L1113.9 1111.6 L1115.0 1119.3 L1116.2 1125.3 L1117.4 1114.0 L1118.6 1127.3 L1119.8 1125.5 L1121.0 1122.0 L1122.2 1101.1 L1123.3 1108.7 L1124.5 1143.3 L1125.7 1103.2 L1126.9 1082.7 L1128.1 1087.8 L1129.3 1098.1 L1130.4 1101.5 L1131.6 1146.9 L1132.8 1104.1 L1134.0 1106.5 L1135.2 1108.2 L1136.4 1096.6 L1137.6 1093.9 L1138.7 1084.8 L1139.9 1097.4 L1141.1 1137.5 L1142.3 1125.5 L1143.5 1125.0 L1144.7 1136.2 L1145.9 1104.7 L1147.0 1095.0 L1148.2 1092.8 L1149.4 1108.4 L1150.6 1116.7 L1151.8 1122.5 L1153.0 1098.8 L1154.1 1119.9 L1155.3 1115.2 L1156.5 1121.5 L1157.7 1115.5 L1158.9 1100.2 L1160.1 1084.0 L1161.3 1088.3 L1162.4 1082.5 L1163.6 1094.0 L1164.8 1105.2 L1166.0 1086.0 L1167.2 1121.9 L1168.4 1095.6 L1169.5 1101.6 L1170.7 1084.7 L1171.9 1085.8 L1173.1 1090.9 L1174.3 1155.1 L1175.5 1108.5 L1176.7 1089.3 L1177.8 1080.9 L1179.0 1085.3 L1180.2 1069.5 L1181.4 1075.1 L1182.6 1092.5 L1183.8 1104.8 L1185.0 1083.5 L1186.1 1084.2 L1187.3 1082.0 L1188.5 1090.6 L1189.7 1090.9 L1190.9 1102.0 L1192.1 1069.4 L1193.2 1062.6 L1194.4 1068.1 L1195.6 1080.6 L1196.8 1071.0 L1198.0 1060.8 L1199.2 1072.5 L1200.4 1074.6 L1201.5 1067.4 L1202.7 1069.3 L1203.9 1069.8 L1205.1 1075.0 L1206.3 1097.9 L1207.5 1088.1 L1208.7 1093.2 L1209.8 1076.3 L1211.0 1065.4 L1212.2 1076.7 L1213.4 1097.6 L1214.6 1104.4 L1215.8 1081.1 L1216.9 1087.1 L1218.1 1101.0 L1219.3 1092.4 L1220.5 1094.2 L1221.7 1082.2 L1222.9 1071.8 L1224.1 1089.2 L1225.2 1077.2 L1226.4 1069.3 L1227.6 1094.6 L1228.8 1081.6 L1230.0 1064.1 L1231.2 1058.8 L1232.3 1063.3 L1233.5 1090.4 L1234.7 1102.1 L1235.9 1085.5 L1237.1 1062.3 L1238.3 1071.5 L1239.5 1095.7 L1240.6 1081.4 L1241.8 1064.3 L1243.0 1082.7 L1244.2 1057.2 L1245.4 1068.9 L1246.6 1110.9 L1247.8 1092.0 L1248.9 1060.0 L1250.1 1062.1 L1251.3 1053.2 L1252.5 1039.0 L1253.7 1034.3 L1254.9 1035.1 L1256.0 1037.5 L1257.2 1043.7 L1258.4 1088.6 L1259.6 1055.7 L1260.8 1059.6 L1262.0 1062.0 L1263.2 1074.6 L1264.3 1056.3 L1265.5 1055.6 L1266.7 1058.9 L1267.9 1038.4 L1269.1 1029.0 L1270.3 1040.7 L1271.5 1044.6 L1272.6 1036.5 L1273.8 1044.4 L1275.0 1060.9 L1276.2 1058.4 L1277.4 1059.3 L1278.6 1036.3 L1279.7 1037.5 L1280.9 1029.1 L1282.1 1015.9 L1283.3 1026.3 L1284.5 1067.6 L1285.7 1051.3 L1286.9 1028.0 L1288.0 1058.6 L1289.2 1000.8 L1290.4 999.0 L1291.6 1006.2 L1292.8 1010.4 L1294.0 1003.5 L1295.1 1015.3 L1296.3 1010.3 L1297.5 990.0 L1298.7 990.1 L1299.9 1004.2 L1301.1 975.9 L1302.3 994.8 L1303.4 965.5 L1304.6 975.2 L1305.8 979.5 L1307.0 959.8 L1308.2 983.1 L1309.4 988.4 L1310.6 971.0 L1311.7 944.2 L1312.9 937.2 L1314.1 928.3 L1315.3 924.2 L1316.5 944.4 L1317.7 946.1 L1318.8 973.6 L1320.0 984.2 L1321.2 958.3 L1322.4 950.2 L1323.6 972.7 L1324.8 977.8 L1326.0 964.6 L1327.1 979.7 L1328.3 969.3 L1329.5 961.5 L1330.7 970.2 L1331.9 989.2 L1333.1 999.9 L1334.3 976.1 L1335.4 966.8 L1336.6 968.5 L1337.8 977.0 L1339.0 989.6 L1340.2 1007.1 L1341.4 1028.8 L1342.5 1026.9 L1343.7 1005.6 L1344.9 1004.6 L1346.1 1003.4 L1347.3 1014.0 L1348.5 1011.5 L1349.7 996.3 L1350.8 996.0 L1352.0 1025.4 L1353.2 1024.2 L1354.4 1042.0 L1355.6 1027.6 L1356.8 1012.8 L1357.9 1002.5 L1359.1 994.4 L1360.3 1000.6 L1361.5 1030.2 L1362.7 1027.4 L1363.9 1076.7 L1365.1 1031.6 L1366.2 1027.4 L1367.4 1026.6 L1368.6 1025.8 L1369.8 1025.9 L1371.0 1025.0 L1372.2 1028.8 L1373.4 1044.5 L1374.5 1052.7 L1375.7 1041.9 L1376.9 1044.9 L1378.1 1069.4 L1379.3 1039.1 L1380.5 1038.1 L1381.6 1061.6 L1382.8 1053.9 L1384.0 1044.4 L1385.2 1039.3 L1386.4 1035.5 L1387.6 1047.1 L1388.8 1062.9 L1389.9 1054.6 L1391.1 1077.4 L1392.3 1066.7 L1393.5 1085.4 L1394.7 1056.9 L1395.9 1069.3 L1397.1 1072.5 L1398.2 1102.1 L1399.4 1085.6 L1400.6 1055.1 L1401.8 1049.6 L1403.0 1067.9 L1404.2 1097.0 L1405.3 1066.6 L1406.5 1064.6 L1407.7 1071.2 L1408.9 1082.3 L1410.1 1084.0 L1411.3 1074.7 L1412.5 1076.6 L1413.6 1089.6 L1414.8 1069.6 L1416.0 1070.3 L1417.2 1064.9 L1418.4 1063.6 L1419.6 1071.7 L1420.7 1065.5 L1421.9 1063.6 L1423.1 1069.6 L1424.3 1071.6 L1425.5 1077.6 L1426.7 1096.1 L1427.9 1107.1 L1429.0 1128.9 L1430.2 1077.9 L1431.4 1087.9 L1432.6 1081.1 L1433.8 1069.4 L1435.0 1093.8 L1436.2 1102.5 L1437.3 1087.6 L1438.5 1078.0 L1439.7 1096.6 L1440.9 1118.0 L1442.1 1103.6 L1443.3 1081.0 L1444.4 1071.6 L1445.6 1077.3 L1446.8 1108.9 L1448.0 1100.9 L1449.2 1092.9 L1450.4 1089.3 L1451.6 1094.4 L1452.7 1106.6 L1453.9 1093.3 L1455.1 1084.5 L1456.3 1087.5 L1457.5 1093.5 L1458.7 1088.1 L1459.9 1090.4 L1461.0 1089.6 L1462.2 1096.6 L1463.4 1092.5 L1464.6 1082.8 L1465.8 1088.7 L1467.0 1135.7 L1468.1 1126.2 L1469.3 1097.6 L1470.5 1097.4 L1471.7 1091.6 L1472.9 1145.0 L1474.1 1103.8 L1475.3 1148.8 L1476.4 1100.0 L1477.6 1088.4 L1478.8 1100.6 L1480.0 1107.7 L1481.2 1128.2 L1482.4 1108.6 L1483.5 1088.1 L1484.7 1092.5 L1485.9 1125.6 L1487.1 1110.2 L1488.3 1111.5 L1489.5 1098.3 L1490.7 1090.0 L1491.8 1093.4 L1493.0 1130.4 L1494.2 1113.4 L1495.4 1107.9 L1496.6 1105.6 L1497.8 1116.8 L1499.0 1113.0 L1500.1 1110.1 L1501.3 1115.8 L1502.5 1129.3 L1503.7 1140.9 L1504.9 1119.3 L1506.1 1112.2 L1507.2 1120.1 L1508.4 1116.6 L1509.6 1129.6 L1510.8 1112.2 L1512.0 1115.1 L1513.2 1126.5 L1514.4 1103.0 L1515.5 1103.6 L1516.7 1099.5 L1517.9 1127.0 L1519.1 1125.1 L1520.3 1106.2 L1521.5 1110.2 L1522.7 1122.0 L1523.8 1143.4 L1525.0 1122.1 L1526.2 1114.4 L1527.4 1117.5 L1528.6 1130.3 L1529.8 1115.3 L1530.9 1107.4 L1532.1 1111.0 L1533.3 1132.0 L1534.5 1128.8 L1535.7 1135.1 L1536.9 1140.4 L1538.1 1125.6 L1539.2 1149.1 L1540.4 1132.3 L1541.6 1117.9 L1542.8 1123.8 L1544.0 1168.1 L1545.2 1122.0 L1546.3 1124.9 L1547.5 1134.3 L1548.7 1116.1 L1549.9 1110.1 L1551.1 1133.9 L1552.3 1140.9 L1553.5 1157.4 L1554.6 1134.5 L1555.8 1120.3 L1557.0 1117.8 L1558.2 1127.1 L1559.4 1174.7 L1560.6 1145.6 L1561.8 1137.6 L1562.9 1130.0 L1564.1 1121.0 L1565.3 1151.7 L1566.5 1122.2 L1567.7 1120.4 L1568.9 1125.3 L1570.0 1123.6 L1571.2 1141.4 L1572.4 1142.4 L1573.6 1147.3 L1574.8 1130.6 L1576.0 1134.0 L1577.2 1119.2 L1578.3 1114.0 L1579.5 1129.1 L1580.7 1132.6 L1581.9 1127.6 L1583.1 1121.6 L1584.3 1116.3 L1585.5 1130.0 L1586.6 1124.6 L1587.8 1136.1 L1589.0 1132.7 L1590.2 1147.3 L1591.4 1158.7 L1592.6 1129.1 L1593.7 1119.0 L1594.9 1131.8 L1596.1 1137.9 L1597.3 1126.3 L1598.5 1152.2 L1599.7 1130.2 L1600.9 1119.9 L1602.0 1122.7 L1603.2 1132.3 L1604.4 1148.3 L1605.6 1141.2 L1606.8 1140.9 L1608.0 1142.3 L1609.1 1130.7 L1610.3 1140.3 L1611.5 1137.8 L1612.7 1147.2 L1613.9 1145.7 L1615.1 1141.6 L1616.3 1140.8 L1617.4 1151.7 L1618.6 1141.8 L1619.8 1122.2 L1621.0 1128.3 L1622.2 1136.1 L1623.4 1154.5 L1624.6 1142.1 L1625.7 1139.0 L1626.9 1117.5 L1628.1 1111.3 L1629.3 1121.3 L1630.5 1136.0 L1631.7 1138.5 L1632.8 1131.4 L1634.0 1148.6 L1635.2 1136.3 L1636.4 1120.0 L1637.6 1129.9 L1638.8 1136.9 L1640.0 1116.6 L1641.1 1121.6 L1642.3 1116.7 L1643.5 1131.3 L1644.7 1117.8 L1645.9 1124.4 L1647.1 1155.6 L1648.3 1129.6 L1649.4 1141.5 L1650.6 1139.9 L1651.8 1127.7 L1653.0 1119.6 L1654.2 1136.1 L1655.4 1117.4 L1656.5 1131.2 L1657.7 1124.2 L1658.9 1123.9 L1660.1 1141.0 L1661.3 1159.6 L1662.5 1132.3 L1663.7 1117.3 L1664.8 1118.7 L1666.0 1116.7 L1667.2 1112.2 L1668.4 1118.8 L1669.6 1144.2 L1670.8 1141.0 L1671.9 1127.3 L1673.1 1142.8 L1674.3 1132.2 L1675.5 1132.9 L1676.7 1133.6 L1677.9 1130.0 L1679.1 1128.3 L1680.2 1126.3 L1681.4 1122.6 L1682.6 1139.3 L1683.8 1141.0 L1685.0 1131.6 L1686.2 1123.7 L1687.4 1137.6 L1688.5 1164.2 L1689.7 1147.6 L1690.9 1141.4 L1692.1 1129.5 L1693.3 1143.1 L1694.5 1129.4 L1695.6 1148.8 L1696.8 1123.3 L1698.0 1116.8 L1699.2 1170.2 L1700.4 1146.9 L1701.6 1120.1 L1702.8 1108.9 L1703.9 1115.2 L1705.1 1123.6 L1706.3 1124.8 L1707.5 1139.6 L1708.7 1149.9 L1709.9 1141.6 L1711.1 1126.5 L1712.2 1136.1 L1713.4 1134.2 L1714.6 1129.9 L1715.8 1147.0 L1717.0 1167.7 L1718.2 1143.0 L1719.3 1122.7 L1720.5 1132.7 L1721.7 1123.1 L1722.9 1117.8 L1724.1 1128.6 L1725.3 1151.7 L1726.5 1139.2 L1727.6 1129.5 L1728.8 1121.9 L1730.0 1104.8 L1731.2 1112.1 L1732.4 1123.7 L1733.6 1124.3 L1734.7 1127.0 L1735.9 1135.1 L1737.1 1135.4 L1738.3 1139.0 L1739.5 1135.3 L1740.7 1128.5 L1741.9 1147.6 L1743.0 1132.3 L1744.2 1114.1 L1745.4 1113.5 L1746.6 1120.4 L1747.8 1125.9 L1749.0 1113.0 L1750.2 1122.7 L1751.3 1135.0 L1752.5 1141.7 L1753.7 1124.1 L1754.9 1131.5 L1756.1 1190.0 L1757.3 1187.3 L1758.4 1131.9 L1759.6 1152.1 L1760.8 1146.7 L1762.0 1138.5 L1763.2 1139.9 L1764.4 1131.5 L1765.6 1123.8 L1766.7 1143.3 L1767.9 1137.0 L1769.1 1121.9 L1770.3 1134.6 L1771.5 1118.8 L1772.7 1137.6 L1773.8 1120.7 L1775.0 1126.4 L1776.2 1168.8 L1777.4 1125.2 L1778.6 1124.2 L1779.8 1135.4 L1781.0 1134.3 L1782.1 1135.3 L1783.3 1136.1 L1784.5 1126.4 L1785.7 1134.0 L1786.9 1179.3 L1788.1 1135.4 L1789.3 1121.2 L1790.4 1138.2 L1791.6 1127.6 L1792.8 1132.1 L1794.0 1139.4 L1795.2 1141.9 L1796.4 1123.7 L1797.5 1133.4 L1798.7 1125.6 L1799.9 1114.7 L1801.1 1126.7 L1802.3 1157.5 L1803.5 1137.7 L1804.7 1127.0 L1805.8 1127.5 L1807.0 1117.6 L1808.2 1107.3 L1809.4 1125.8 L1810.6 1135.5 L1811.8 1122.7 L1813.0 1101.0 L1814.1 1093.9 L1815.3 1117.4 L1816.5 1118.6 L1817.7 1104.8 L1818.9 1100.0 L1820.1 1080.6 L1821.2 1068.3 L1822.4 1062.6 L1823.6 1077.7 L1824.8 1077.1 L1826.0 1088.9 L1827.2 1140.7 L1828.4 1098.2 L1829.5 1141.1 L1830.7 1106.2 L1831.9 1126.9 L1833.1 1117.0 L1834.3 1097.9 L1835.5 1100.6 L1836.6 1110.5 L1837.8 1120.2 L1839.0 1129.1 L1840.2 1123.3 L1841.4 1115.4 L1842.6 1107.2 L1843.8 1125.0 L1844.9 1127.9 L1846.1 1126.3 L1847.3 1132.6 L1848.5 1136.4 L1849.7 1128.0 L1850.9 1127.6 L1852.1 1108.6 L1853.2 1115.7 L1854.4 1137.8 L1855.6 1130.6 L1856.8 1106.7 L1858.0 1123.6 L1859.2 1119.8 L1860.3 1113.7 L1861.5 1145.7 L1862.7 1124.6 L1863.9 1102.2 L1865.1 1106.6 L1866.3 1123.2 L1867.5 1129.1 L1868.6 1163.2 L1869.8 1159.2 L1871.0 1150.6 L1872.2 1127.6 L1873.4 1111.6 L1874.6 1115.9 L1875.8 1112.4 L1876.9 1131.8 L1878.1 1137.4 L1879.3 1142.8 L1880.5 1147.1 L1881.7 1121.1 L1882.9 1133.4 L1884.0 1116.3 L1885.2 1105.9 L1886.4 1119.1 L1887.6 1144.3 L1888.8 1112.6 L1890.0 1114.6 L1891.2 1147.6 L1892.3 1137.4 L1893.5 1110.4 L1894.7 1106.1 L1895.9 1153.4 L1897.1 1106.7 L1898.3 1104.8 L1899.4 1113.9 L1900.6 1130.2 L1901.8 1131.7 L1903.0 1129.0 L1904.2 1148.4 L1905.4 1134.0 L1906.6 1124.5 L1907.7 1127.5 L1908.9 1107.1 L1910.1 1099.5 L1911.3 1089.3 L1912.5 1085.5 L1913.7 1085.0 L1914.9 1103.9 L1916.0 1130.1 L1917.2 1086.9 L1918.4 1091.9 L1919.6 1141.6 L1920.8 1128.4" fill="none" stroke="#0000ff" stroke-width="1" stroke-linejoin="miter" stroke-miterlimit="3"/>
<line x1="693.50" y1="811.50" x2="693.50" y2="1211.50" stroke="#000" stroke-width="1" />
<path d="M687.5 811.5H693.5M689.5 825.5H693.5M685.5 838.5H693.5M689.5 851.5H693.5M687.5 865.5H693.5M689.5 878.5H693.5M685.5 891.5H693.5M689.5 905.5H693.5M687.5 918.5H693.5M689.5 931.5H693.5M685.5 944.5H693.5M689.5 958.5H693.5M687.5 971.5H693.5M689.5 984.5H693.5M685.5 998.5H693.5M689.5 1011.5H693.5M687.5 1024.5H693.5M689.5 1038.5H693.5M685.5 1051.5H693.5M689.5 1064.5H693.5M687.5 1078.5H693.5M689.5 1091.5H693.5M685.5 1104.5H693.5M689.5 1118.5H693.5M687.5 1131.5H693.5M689.5 1144.5H693.5M685.5 1157.5H693.5M689.5 1171.5H693.5M687.5 1184.5H693.5M689.5 1197.5H693.5M685.5 1211.5H693.5" stroke="#000" stroke-width="1" fill="none"/>
<text x="667.58" y="846.00" font-size="23.26" fill="#000" textLength="12.87" lengthAdjust="spacingAndGlyphs">0</text>
<text x="645.14" y="899.00" font-size="23.26" fill="#000" textLength="35.36" lengthAdjust="spacingAndGlyphs">-20</text>
<text x="645.14" y="952.00" font-size="23.26" fill="#000" textLength="35.36" lengthAdjust="spacingAndGlyphs">-40</text>
<text x="645.14" y="1006.00" font-size="23.26" fill="#000" textLength="35.36" lengthAdjust="spacingAndGlyphs">-60</text>
<text x="645.14" y="1059.00" font-size="23.26" fill="#000" textLength="35.36" lengthAdjust="spacingAndGlyphs">-80</text>
<text x="631.16" y="1112.00" font-size="23.26" fill="#000" textLength="49.34" lengthAdjust="spacingAndGlyphs">-100</text>
<text x="631.16" y="1165.00" font-size="23.26" fill="#000" textLength="49.34" lengthAdjust="spacingAndGlyphs">-120</text>
<text x="631.16" y="1219.00" font-size="23.26" fill="#000" textLength="49.34" lengthAdjust="spacingAndGlyphs">-140</text>
<line x1="702.00" y1="1220.50" x2="1926.00" y2="1220.50" stroke="#000" stroke-width="1" />
<path d="M702.5 1220.0V1226.5M763.5 1220.0V1224.5M824.5 1220.0V1228.5M886.5 1220.0V1224.5M947.5 1220.0V1226.5M1008.5 1220.0V1224.5M1069.5 1220.0V1228.5M1131.5 1220.0V1224.5M1192.5 1220.0V1226.5M1253.5 1220.0V1224.5M1314.5 1220.0V1228.5M1375.5 1220.0V1224.5M1437.5 1220.0V1226.5M1498.5 1220.0V1224.5M1559.5 1220.0V1228.5M1620.5 1220.0V1224.5M1682.5 1220.0V1226.5M1743.5 1220.0V1224.5M1804.5 1220.0V1228.5M1865.5 1220.0V1224.5" stroke="#000" stroke-width="1" fill="none"/>
<text x="779.85" y="1250.00" font-size="23.26" fill="#000" textLength="89.54" lengthAdjust="spacingAndGlyphs">396.000</text>
<text x="1024.85" y="1250.00" font-size="23.26" fill="#000" textLength="89.54" lengthAdjust="spacingAndGlyphs">398.000</text>
<text x="1269.62" y="1250.00" font-size="23.26" fill="#000" textLength="89.77" lengthAdjust="spacingAndGlyphs">400.000</text>
<text x="1514.62" y="1250.00" font-size="23.26" fill="#000" textLength="89.77" lengthAdjust="spacingAndGlyphs">402.000</text>
<text x="1759.62" y="1250.00" font-size="23.26" fill="#000" textLength="89.77" lengthAdjust="spacingAndGlyphs">404.000</text>
<text x="1183.95" y="1279.40" font-size="29.07" fill="#000" textLength="259.15" lengthAdjust="spacingAndGlyphs" font-weight="bold">Frequency (MHz)</text>
<g transform="translate(607.50 1147.40) rotate(-90)"><text x="-2.15" y="0.00" font-size="29.07" fill="#000" textLength="277.26" lengthAdjust="spacingAndGlyphs" font-weight="bold">Relative Gain (dB)</text></g></svg>
</body></html>
